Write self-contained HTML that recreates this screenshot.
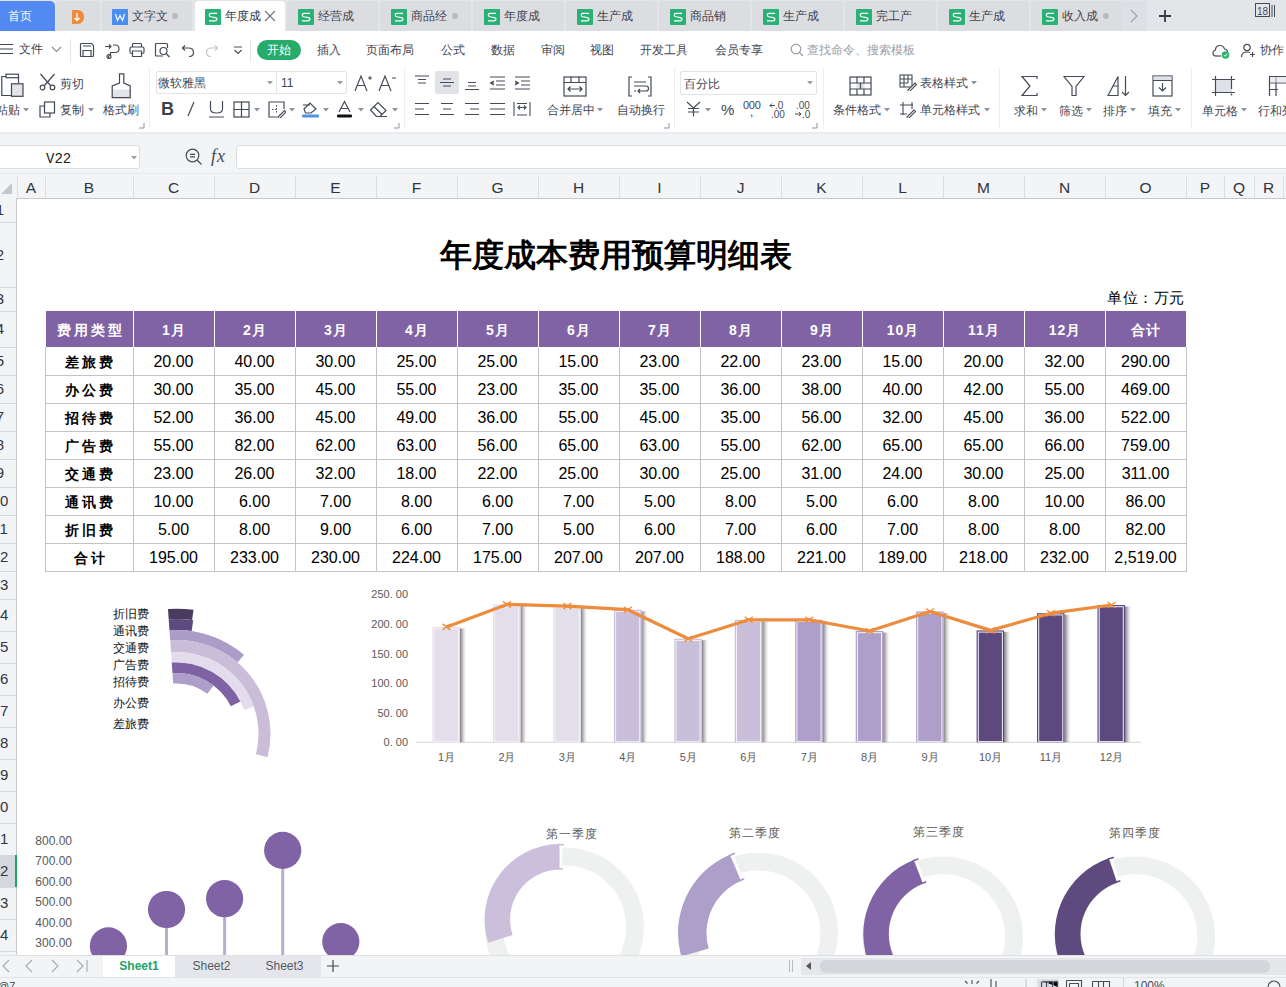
<!DOCTYPE html>
<html><head><meta charset="utf-8"><style>
html,body{margin:0;padding:0;}
body{width:1286px;height:987px;overflow:hidden;position:relative;font-family:"Liberation Sans", sans-serif;background:#fff}
div{box-sizing:border-box}
</style></head><body>
<div style="position:absolute;left:0px;top:0px;width:1286px;height:31px;background:#e4e5e9"></div><div style="position:absolute;left:0px;top:1px;width:55px;height:30px;background:#5289f3;border-top-right-radius:5px"></div><div style="position:absolute;left:8px;top:7.0px;height:18px;font-size:12px;line-height:18px;color:#ffffff;white-space:nowrap;">首页</div><div style="position:absolute;left:56px;top:1px;width:44px;height:30px;background:#dcdde1;border-radius:4px 4px 0 0"></div><svg style="position:absolute;left:71px;top:9px;width:14px;height:16px;" width="14" height="16" viewBox="0 0 14 16"><path d="M1 1H6C11 1 13 4.5 13 8C13 11.5 11 15 6 15H1Z" fill="#f08a3c"/><path d="M6 4V11M3.5 9L6 11.5L8.5 9" fill="none" stroke="#fff" stroke-width="1.3"/></svg><div style="position:absolute;left:102px;top:1px;width:90px;height:30px;background:#dcdde1;border-radius:4px 4px 0 0"></div><svg style="position:absolute;left:112px;top:9px;width:16px;height:16px;" width="16" height="16" viewBox="0 0 16 16"><rect width="16" height="16" fill="#4b8ef1"/><path d="M3.5 5L5.5 11.5L8 6.5L10.5 11.5L12.5 5" fill="none" stroke="#fff" stroke-width="1.2"/></svg><div style="position:absolute;left:132px;top:7.0px;height:18px;font-size:12px;line-height:18px;color:#3d4452;white-space:nowrap;">文字文</div><div style="position:absolute;left:172px;top:13px;width:6px;height:6px;border-radius:3px;background:#b9bbc4"></div><div style="position:absolute;left:195px;top:1px;width:90px;height:31px;background:#ffffff;border-radius:4px 4px 0 0"></div><svg style="position:absolute;left:205px;top:9px;width:16px;height:16px;" width="16" height="16" viewBox="0 0 16 16"><rect width="16" height="16" rx="1" fill="#2bb176"/><path d="M12 4.4H6Q4.2 4.4 4.2 6Q4.2 7.4 6 7.8L10.3 8.6Q12 9 12 10.3Q12 11.8 10.2 11.8H4" fill="none" stroke="#fff" stroke-width="1.15"/></svg><div style="position:absolute;left:225px;top:7.0px;height:18px;font-size:12px;line-height:18px;color:#2f3542;white-space:nowrap;">年度成</div><svg style="position:absolute;left:264px;top:10px;width:12px;height:12px;" width="12" height="12" viewBox="0 0 12 12"><path d="M1 1L11 11M11 1L1 11" stroke="#6b717c" stroke-width="1.1"/></svg><div style="position:absolute;left:287px;top:1px;width:91px;height:30px;background:#dcdde1;border-radius:4px 4px 0 0"></div><svg style="position:absolute;left:298px;top:9px;width:16px;height:16px;" width="16" height="16" viewBox="0 0 16 16"><rect width="16" height="16" rx="1" fill="#2bb176"/><path d="M12 4.4H6Q4.2 4.4 4.2 6Q4.2 7.4 6 7.8L10.3 8.6Q12 9 12 10.3Q12 11.8 10.2 11.8H4" fill="none" stroke="#fff" stroke-width="1.15"/></svg><div style="position:absolute;left:318px;top:7.0px;height:18px;font-size:12px;line-height:18px;color:#3d4452;white-space:nowrap;">经营成</div><div style="position:absolute;left:380px;top:1px;width:91px;height:30px;background:#dcdde1;border-radius:4px 4px 0 0"></div><svg style="position:absolute;left:391px;top:9px;width:16px;height:16px;" width="16" height="16" viewBox="0 0 16 16"><rect width="16" height="16" rx="1" fill="#2bb176"/><path d="M12 4.4H6Q4.2 4.4 4.2 6Q4.2 7.4 6 7.8L10.3 8.6Q12 9 12 10.3Q12 11.8 10.2 11.8H4" fill="none" stroke="#fff" stroke-width="1.15"/></svg><div style="position:absolute;left:411px;top:7.0px;height:18px;font-size:12px;line-height:18px;color:#3d4452;white-space:nowrap;">商品经</div><div style="position:absolute;left:452px;top:13px;width:6px;height:6px;border-radius:3px;background:#b9bbc4"></div><div style="position:absolute;left:473px;top:1px;width:91px;height:30px;background:#dcdde1;border-radius:4px 4px 0 0"></div><svg style="position:absolute;left:484px;top:9px;width:16px;height:16px;" width="16" height="16" viewBox="0 0 16 16"><rect width="16" height="16" rx="1" fill="#2bb176"/><path d="M12 4.4H6Q4.2 4.4 4.2 6Q4.2 7.4 6 7.8L10.3 8.6Q12 9 12 10.3Q12 11.8 10.2 11.8H4" fill="none" stroke="#fff" stroke-width="1.15"/></svg><div style="position:absolute;left:504px;top:7.0px;height:18px;font-size:12px;line-height:18px;color:#3d4452;white-space:nowrap;">年度成</div><div style="position:absolute;left:566px;top:1px;width:91px;height:30px;background:#dcdde1;border-radius:4px 4px 0 0"></div><svg style="position:absolute;left:577px;top:9px;width:16px;height:16px;" width="16" height="16" viewBox="0 0 16 16"><rect width="16" height="16" rx="1" fill="#2bb176"/><path d="M12 4.4H6Q4.2 4.4 4.2 6Q4.2 7.4 6 7.8L10.3 8.6Q12 9 12 10.3Q12 11.8 10.2 11.8H4" fill="none" stroke="#fff" stroke-width="1.15"/></svg><div style="position:absolute;left:597px;top:7.0px;height:18px;font-size:12px;line-height:18px;color:#3d4452;white-space:nowrap;">生产成</div><div style="position:absolute;left:659px;top:1px;width:91px;height:30px;background:#dcdde1;border-radius:4px 4px 0 0"></div><svg style="position:absolute;left:670px;top:9px;width:16px;height:16px;" width="16" height="16" viewBox="0 0 16 16"><rect width="16" height="16" rx="1" fill="#2bb176"/><path d="M12 4.4H6Q4.2 4.4 4.2 6Q4.2 7.4 6 7.8L10.3 8.6Q12 9 12 10.3Q12 11.8 10.2 11.8H4" fill="none" stroke="#fff" stroke-width="1.15"/></svg><div style="position:absolute;left:690px;top:7.0px;height:18px;font-size:12px;line-height:18px;color:#3d4452;white-space:nowrap;">商品销</div><div style="position:absolute;left:752px;top:1px;width:91px;height:30px;background:#dcdde1;border-radius:4px 4px 0 0"></div><svg style="position:absolute;left:763px;top:9px;width:16px;height:16px;" width="16" height="16" viewBox="0 0 16 16"><rect width="16" height="16" rx="1" fill="#2bb176"/><path d="M12 4.4H6Q4.2 4.4 4.2 6Q4.2 7.4 6 7.8L10.3 8.6Q12 9 12 10.3Q12 11.8 10.2 11.8H4" fill="none" stroke="#fff" stroke-width="1.15"/></svg><div style="position:absolute;left:783px;top:7.0px;height:18px;font-size:12px;line-height:18px;color:#3d4452;white-space:nowrap;">生产成</div><div style="position:absolute;left:845px;top:1px;width:91px;height:30px;background:#dcdde1;border-radius:4px 4px 0 0"></div><svg style="position:absolute;left:856px;top:9px;width:16px;height:16px;" width="16" height="16" viewBox="0 0 16 16"><rect width="16" height="16" rx="1" fill="#2bb176"/><path d="M12 4.4H6Q4.2 4.4 4.2 6Q4.2 7.4 6 7.8L10.3 8.6Q12 9 12 10.3Q12 11.8 10.2 11.8H4" fill="none" stroke="#fff" stroke-width="1.15"/></svg><div style="position:absolute;left:876px;top:7.0px;height:18px;font-size:12px;line-height:18px;color:#3d4452;white-space:nowrap;">完工产</div><div style="position:absolute;left:938px;top:1px;width:91px;height:30px;background:#dcdde1;border-radius:4px 4px 0 0"></div><svg style="position:absolute;left:949px;top:9px;width:16px;height:16px;" width="16" height="16" viewBox="0 0 16 16"><rect width="16" height="16" rx="1" fill="#2bb176"/><path d="M12 4.4H6Q4.2 4.4 4.2 6Q4.2 7.4 6 7.8L10.3 8.6Q12 9 12 10.3Q12 11.8 10.2 11.8H4" fill="none" stroke="#fff" stroke-width="1.15"/></svg><div style="position:absolute;left:969px;top:7.0px;height:18px;font-size:12px;line-height:18px;color:#3d4452;white-space:nowrap;">生产成</div><div style="position:absolute;left:1031px;top:1px;width:91px;height:30px;background:#dcdde1;border-radius:4px 4px 0 0"></div><svg style="position:absolute;left:1042px;top:9px;width:16px;height:16px;" width="16" height="16" viewBox="0 0 16 16"><rect width="16" height="16" rx="1" fill="#2bb176"/><path d="M12 4.4H6Q4.2 4.4 4.2 6Q4.2 7.4 6 7.8L10.3 8.6Q12 9 12 10.3Q12 11.8 10.2 11.8H4" fill="none" stroke="#fff" stroke-width="1.15"/></svg><div style="position:absolute;left:1062px;top:7.0px;height:18px;font-size:12px;line-height:18px;color:#3d4452;white-space:nowrap;">收入成</div><div style="position:absolute;left:1103px;top:13px;width:6px;height:6px;border-radius:3px;background:#b9bbc4"></div><div style="position:absolute;left:1122px;top:1px;width:25px;height:30px;background:#dfe0e6"></div><svg style="position:absolute;left:1129px;top:9px;width:10px;height:14px;" width="10" height="14" viewBox="0 0 10 14"><path d="M2 1L8 7L2 13" fill="none" stroke="#9da2ad" stroke-width="1.2"/></svg><svg style="position:absolute;left:1158px;top:9px;width:14px;height:14px;" width="14" height="14" viewBox="0 0 14 14"><path d="M7 1V13M1 7H13" stroke="#333a48" stroke-width="1.8"/></svg><svg style="position:absolute;left:1254px;top:2px;width:24px;height:16px;" width="24" height="16" viewBox="0 0 24 16"><rect x="1.5" y="1.5" width="14" height="13" fill="none" stroke="#444b57" stroke-width="1"/><text x="3" y="12.5" font-size="10" font-family="Liberation Sans" fill="#444b57">18</text><path d="M18 3V15M20.5 3V15" stroke="#444b57" stroke-width="1"/></svg><div style="position:absolute;left:0px;top:31px;width:1286px;height:101px;background:#ffffff"></div><svg style="position:absolute;left:0px;top:43px;width:14px;height:12px;" width="14" height="12" viewBox="0 0 14 12"><path d="M0 1.5H13M0 6H13M0 10.5H13" stroke="#3f4552" stroke-width="1.2"/></svg><div style="position:absolute;left:19px;top:40.0px;height:18px;font-size:12px;line-height:18px;color:#3f4552;white-space:nowrap;">文件</div><svg style="position:absolute;left:51px;top:45px;width:11px;height:8px;" width="11" height="8" viewBox="0 0 11 8"><path d="M1 2L5.5 6.5L10 2" fill="none" stroke="#8a8f99" stroke-width="1.1"/></svg><div style="position:absolute;left:70px;top:39px;width:1px;height:23px;background:#e3e4e7"></div><div style="position:absolute;left:250px;top:39px;width:1px;height:23px;background:#e3e4e7"></div><svg style="position:absolute;left:79px;top:42px;width:16px;height:16px;" width="16" height="16" viewBox="0 0 16 16"><path d="M1.5 2.5Q1.5 1.5 2.5 1.5H12.5L14.5 3.5V13.5Q14.5 14.5 13.5 14.5H2.5Q1.5 14.5 1.5 13.5Z M4 14.5V8.5H12V14.5 M4 4H12" fill="none" stroke="#464c58" stroke-width="1.2"/></svg><svg style="position:absolute;left:104px;top:43px;width:17px;height:16px;" width="17" height="16" viewBox="0 0 17 16"><path d="M1 3.5H7M5 1.5L7 3.5L5 5.5 M9 2H11Q15 2 15 6Q15 9.5 11 9.5H6.5V12 M6.5 12A2 2 0 1 0 6.5 16" fill="none" stroke="#464c58" stroke-width="1.2"/><circle cx="5" cy="13.5" r="2" fill="none" stroke="#464c58" stroke-width="1.2"/></svg><svg style="position:absolute;left:129px;top:42px;width:16px;height:16px;" width="16" height="16" viewBox="0 0 16 16"><path d="M3.5 5V2.5Q3.5 1.5 4.5 1.5H11.5Q12.5 1.5 12.5 2.5V5 M3.5 11.5H2.5Q1 11.5 1 10V6.5Q1 5 2.5 5H13.5Q15 5 15 6.5V10Q15 11.5 13.5 11.5H12.5 M3.5 9H12.5V14.5H3.5Z" fill="none" stroke="#464c58" stroke-width="1.2"/></svg><svg style="position:absolute;left:154px;top:42px;width:17px;height:16px;" width="17" height="16" viewBox="0 0 17 16"><path d="M9 14H2.5Q1.5 14 1.5 13V2.5Q1.5 1.5 2.5 1.5H12.5Q13.5 1.5 13.5 2.5V6" fill="none" stroke="#464c58" stroke-width="1.2"/><circle cx="9.5" cy="9" r="3.5" fill="none" stroke="#464c58" stroke-width="1.2"/><path d="M12 11.5L15.5 15" fill="none" stroke="#464c58" stroke-width="1.2"/></svg><svg style="position:absolute;left:181px;top:44px;width:14px;height:13px;" width="14" height="13" viewBox="0 0 14 13"><path d="M4 1.5L1.5 4L4 6.5 M1.5 4H7.5Q12.5 4 12.5 8.5Q12.5 12.5 8 12.5" fill="none" stroke="#464c58" stroke-width="1.2"/></svg><svg style="position:absolute;left:205px;top:44px;width:14px;height:13px;" width="14" height="13" viewBox="0 0 14 13"><path d="M10 1.5L12.5 4L10 6.5 M12.5 4H6.5Q1.5 4 1.5 8.5Q1.5 12.5 6 12.5" fill="none" stroke="#c3c6cc" stroke-width="1.2"/></svg><svg style="position:absolute;left:233px;top:46px;width:10px;height:9px;" width="10" height="9" viewBox="0 0 10 9"><path d="M1 1H9 M1.5 4L5 7.5L8.5 4" fill="none" stroke="#464c58" stroke-width="1.2"/></svg><div style="position:absolute;left:257px;top:40px;width:44px;height:20px;background:#26ab6b;border-radius:10px;color:#fff;font-size:12px;line-height:20px;text-align:center">开始</div><div style="position:absolute;left:317px;top:41.0px;height:18px;font-size:12px;line-height:18px;color:#3f4552;white-space:nowrap;">插入</div><div style="position:absolute;left:366px;top:41.0px;height:18px;font-size:12px;line-height:18px;color:#3f4552;white-space:nowrap;">页面布局</div><div style="position:absolute;left:441px;top:41.0px;height:18px;font-size:12px;line-height:18px;color:#3f4552;white-space:nowrap;">公式</div><div style="position:absolute;left:491px;top:41.0px;height:18px;font-size:12px;line-height:18px;color:#3f4552;white-space:nowrap;">数据</div><div style="position:absolute;left:541px;top:41.0px;height:18px;font-size:12px;line-height:18px;color:#3f4552;white-space:nowrap;">审阅</div><div style="position:absolute;left:590px;top:41.0px;height:18px;font-size:12px;line-height:18px;color:#3f4552;white-space:nowrap;">视图</div><div style="position:absolute;left:640px;top:41.0px;height:18px;font-size:12px;line-height:18px;color:#3f4552;white-space:nowrap;">开发工具</div><div style="position:absolute;left:715px;top:41.0px;height:18px;font-size:12px;line-height:18px;color:#3f4552;white-space:nowrap;">会员专享</div><svg style="position:absolute;left:790px;top:43px;width:14px;height:14px;" width="14" height="14" viewBox="0 0 14 14"><circle cx="6" cy="6" r="4.8" fill="none" stroke="#9a9fa8" stroke-width="1.2"/><path d="M9.5 9.5L13 13" stroke="#9a9fa8" stroke-width="1.2"/></svg><div style="position:absolute;left:807px;top:41.0px;height:18px;font-size:12px;line-height:18px;color:#9ba0a9;white-space:nowrap;">查找命令、搜索模板</div><svg style="position:absolute;left:1212px;top:43px;width:20px;height:16px;" width="20" height="16" viewBox="0 0 20 16"><path d="M4 13Q1 13 1 10Q1 7.5 3.5 7Q3.5 2.5 8 2.5Q11.5 2.5 12.5 6Q15.5 6 15.5 9.5" fill="none" stroke="#454b57" stroke-width="1.2"/><path d="M4 13H9" stroke="#454b57" stroke-width="1.2"/><circle cx="13.5" cy="12" r="3.8" fill="#2bb673"/><path d="M11.8 12L13.1 13.3L15.3 10.9" fill="none" stroke="#fff" stroke-width="1"/></svg><svg style="position:absolute;left:1240px;top:43px;width:16px;height:15px;" width="16" height="15" viewBox="0 0 16 15"><circle cx="7" cy="4.5" r="3.2" fill="none" stroke="#464c58" stroke-width="1.2"/><path d="M1.5 14Q1.5 9 7 9Q9 9 10 9.6 M12.5 9V14 M10 11.5H15" fill="none" stroke="#464c58" stroke-width="1.2"/></svg><div style="position:absolute;left:1260px;top:41.0px;height:18px;font-size:12px;line-height:18px;color:#3f4552;white-space:nowrap;">协作</div><div style="position:absolute;left:149px;top:68px;width:1px;height:61px;background:#eceef1"></div><div style="position:absolute;left:404px;top:68px;width:1px;height:61px;background:#eceef1"></div><div style="position:absolute;left:674px;top:68px;width:1px;height:61px;background:#eceef1"></div><div style="position:absolute;left:823px;top:68px;width:1px;height:61px;background:#eceef1"></div><div style="position:absolute;left:999px;top:68px;width:1px;height:61px;background:#eceef1"></div><div style="position:absolute;left:1191px;top:68px;width:1px;height:61px;background:#eceef1"></div><svg style="position:absolute;left:0px;top:72px;width:25px;height:27px;" width="25" height="27" viewBox="0 0 25 27"><path d="M6 4.5H1.8V23.5H11 M18.5 4.5V11" fill="none" stroke="#424854" stroke-width="1.2"/><rect x="6" y="2.2" width="12.5" height="3.5" fill="none" stroke="#424854" stroke-width="1.2"/><rect x="11.5" y="11.8" width="11.5" height="12.5" fill="#e3e4ea" stroke="#424854" stroke-width="1.2"/></svg><div style="position:absolute;left:-4px;top:101.0px;height:18px;font-size:12px;line-height:18px;color:#3f4552;white-space:nowrap;">粘贴</div><svg style="position:absolute;left:23px;top:108px;width:6px;height:4px;" width="6" height="4" viewBox="0 0 6 4"><path d="M0 0H6L3 3.5Z" fill="#8d929b"/></svg><svg style="position:absolute;left:39px;top:73px;width:18px;height:18px;" width="18" height="18" viewBox="0 0 18 18"><path d="M1.5 1L11.5 12.5 M15.5 1L5.5 12.5" fill="none" stroke="#424854" stroke-width="1.2"/><circle cx="3.5" cy="14.5" r="2.3" fill="none" stroke="#424854" stroke-width="1.2"/><circle cx="13.5" cy="14.5" r="2.3" fill="none" stroke="#424854" stroke-width="1.2"/></svg><div style="position:absolute;left:60px;top:75.0px;height:18px;font-size:12px;line-height:18px;color:#3f4552;white-space:nowrap;">剪切</div><svg style="position:absolute;left:39px;top:101px;width:17px;height:17px;" width="17" height="17" viewBox="0 0 17 17"><rect x="5.5" y="1" width="10" height="11" fill="none" stroke="#424854" stroke-width="1.2"/><path d="M5.5 5H1V16H11V12" fill="none" stroke="#424854" stroke-width="1.2"/></svg><div style="position:absolute;left:60px;top:101.0px;height:18px;font-size:12px;line-height:18px;color:#3f4552;white-space:nowrap;">复制</div><svg style="position:absolute;left:88px;top:108px;width:6px;height:4px;" width="6" height="4" viewBox="0 0 6 4"><path d="M0 0H6L3 3.5Z" fill="#8d929b"/></svg><svg style="position:absolute;left:111px;top:72px;width:21px;height:28px;" width="21" height="28" viewBox="0 0 21 28"><rect x="1.5" y="17.5" width="18" height="8" fill="#e3e4ea"/><path d="M8.5 1.8H12.8V11L19.2 14V25.6H1.2V14L8.5 11Z" fill="none" stroke="#424854" stroke-width="1.2"/></svg><div style="position:absolute;left:103px;top:101.0px;height:18px;font-size:12px;line-height:18px;color:#3f4552;white-space:nowrap;">格式刷</div><svg style="position:absolute;left:139px;top:123px;width:6px;height:6px;" width="6" height="6" viewBox="0 0 6 6"><path d="M5 0V5H0" fill="none" stroke="#8d929b" stroke-width="1"/></svg><div style="position:absolute;left:156px;top:71px;width:191px;height:23px;border:1px solid #e3e4e8;border-radius:2px;box-sizing:border-box"></div><div style="position:absolute;left:276px;top:71px;width:1px;height:23px;background:#e3e4e8"></div><div style="position:absolute;left:158px;top:74.0px;height:18px;font-size:12px;line-height:18px;color:#3f4552;white-space:nowrap;">微软雅黑</div><svg style="position:absolute;left:267px;top:81px;width:6px;height:4px;" width="6" height="4" viewBox="0 0 6 4"><path d="M0 0H6L3 3.5Z" fill="#9a9ea6"/></svg><div style="position:absolute;left:281px;top:74.0px;height:18px;font-size:12px;line-height:18px;color:#3f4552;white-space:nowrap;">11</div><svg style="position:absolute;left:337px;top:81px;width:6px;height:4px;" width="6" height="4" viewBox="0 0 6 4"><path d="M0 0H6L3 3.5Z" fill="#9a9ea6"/></svg><svg style="position:absolute;left:354px;top:73px;width:18px;height:20px;" width="18" height="20" viewBox="0 0 18 20"><path d="M1 18L7 3L13 18M3.5 12.5H10.5" fill="none" stroke="#454b57" stroke-width="1.2"/><path d="M14 5H18M16 3V7" stroke="#454b57" stroke-width="1"/></svg><svg style="position:absolute;left:378px;top:73px;width:18px;height:20px;" width="18" height="20" viewBox="0 0 18 20"><path d="M1 18L7 3L13 18M3.5 12.5H10.5" fill="none" stroke="#454b57" stroke-width="1.2"/><path d="M14 5H18" stroke="#454b57" stroke-width="1"/></svg><div style="position:absolute;left:161px;top:99px;width:14px;height:20px;font-size:18px;line-height:20px;color:#3a404c;font-weight:bold">B</div><svg style="position:absolute;left:185px;top:101px;width:12px;height:16px;" width="12" height="16" viewBox="0 0 12 16"><path d="M9 1L3 15" stroke="#454b57" stroke-width="1.2"/></svg><svg style="position:absolute;left:208px;top:100px;width:17px;height:18px;" width="17" height="18" viewBox="0 0 17 18"><path d="M2.5 1V9Q2.5 13 8.5 13Q14.5 13 14.5 9V1M1 17H16" fill="none" stroke="#454b57" stroke-width="1.2"/></svg><svg style="position:absolute;left:233px;top:101px;width:17px;height:17px;" width="17" height="17" viewBox="0 0 17 17"><rect x="1" y="1" width="15" height="15" fill="none" stroke="#424854" stroke-width="1.2"/><path d="M8.5 1V16M1 8.5H16" fill="none" stroke="#424854" stroke-width="1.2"/></svg><svg style="position:absolute;left:254px;top:108px;width:6px;height:4px;" width="6" height="4" viewBox="0 0 6 4"><path d="M0 0H6L3 3.5Z" fill="#8d929b"/></svg><svg style="position:absolute;left:268px;top:101px;width:18px;height:17px;" width="18" height="17" viewBox="0 0 18 17"><path d="M9 16H1V1H16V8" fill="none" stroke="#454b57" stroke-width="1.2"/><path d="M4 8.5H9M8.5 4V12" stroke="#454b57" stroke-width="1" stroke-dasharray="1.5 1.5"/><path d="M10 16L16.5 9.5L18 11L11.5 17.5H10Z" fill="none" stroke="#454b57" stroke-width="1.1"/></svg><svg style="position:absolute;left:289px;top:108px;width:6px;height:4px;" width="6" height="4" viewBox="0 0 6 4"><path d="M0 0H6L3 3.5Z" fill="#8d929b"/></svg><svg style="position:absolute;left:301px;top:100px;width:19px;height:18px;" width="19" height="18" viewBox="0 0 19 18"><path d="M3 9L9 3L15 9L10 13H4.5Z" fill="none" stroke="#454b57" stroke-width="1.2"/><path d="M2 5H9" stroke="#454b57" stroke-width="1.1"/><rect x="1" y="14.5" width="17" height="3" rx="1.2" fill="#4a94e4"/></svg><svg style="position:absolute;left:323px;top:108px;width:6px;height:4px;" width="6" height="4" viewBox="0 0 6 4"><path d="M0 0H6L3 3.5Z" fill="#8d929b"/></svg><svg style="position:absolute;left:336px;top:100px;width:17px;height:18px;" width="17" height="18" viewBox="0 0 17 18"><path d="M3 12L8.5 1.5L14 12M5 8.5H12" fill="none" stroke="#454b57" stroke-width="1.2"/><rect x="1" y="14.5" width="15" height="3" rx="1.2" fill="#111"/></svg><svg style="position:absolute;left:358px;top:108px;width:6px;height:4px;" width="6" height="4" viewBox="0 0 6 4"><path d="M0 0H6L3 3.5Z" fill="#8d929b"/></svg><svg style="position:absolute;left:369px;top:101px;width:19px;height:16px;" width="19" height="16" viewBox="0 0 19 16"><path d="M1.5 9L9 1.5L17 9.5L11 15.5H7.5Z M5 5.5L13 13.5 M7.5 15.5H18" fill="none" stroke="#454b57" stroke-width="1.2"/></svg><svg style="position:absolute;left:392px;top:108px;width:6px;height:4px;" width="6" height="4" viewBox="0 0 6 4"><path d="M0 0H6L3 3.5Z" fill="#8d929b"/></svg><svg style="position:absolute;left:394px;top:123px;width:6px;height:6px;" width="6" height="6" viewBox="0 0 6 6"><path d="M5 0V5H0" fill="none" stroke="#8d929b" stroke-width="1"/></svg><div style="position:absolute;left:435px;top:71px;width:24px;height:23px;background:#e2e3e8;border-radius:2px"></div><svg style="position:absolute;left:414px;top:75px;width:16px;height:9px;" width="16" height="9" viewBox="0 0 16 9"><path d="M1 1H15M4 4.5H12M4 8H12" stroke="#454b57" stroke-width="1.1"/></svg><svg style="position:absolute;left:439px;top:78px;width:16px;height:10px;" width="16" height="10" viewBox="0 0 16 10"><path d="M4 1H12M1 4.5H15M4 8H12" stroke="#454b57" stroke-width="1.1"/></svg><svg style="position:absolute;left:464px;top:81px;width:16px;height:10px;" width="16" height="10" viewBox="0 0 16 10"><path d="M4 1.5H12M4 5H12M1 8.5H15" stroke="#454b57" stroke-width="1.1"/></svg><svg style="position:absolute;left:489px;top:76px;width:17px;height:14px;" width="17" height="14" viewBox="0 0 17 14"><path d="M1 1H16M7 5H16M7 9H16M1 13H16M5 5L1.5 7L5 9M1.5 7H5" stroke="#454b57" stroke-width="1.1" fill="none"/></svg><svg style="position:absolute;left:514px;top:76px;width:17px;height:14px;" width="17" height="14" viewBox="0 0 17 14"><path d="M1 1H16M7 5H16M7 9H16M1 13H16M1 5L4.5 7L1 9M1 7H4.5" stroke="#454b57" stroke-width="1.1" fill="none"/></svg><svg style="position:absolute;left:414px;top:102px;width:16px;height:14px;" width="16" height="14" viewBox="0 0 16 14"><path d="M1 1.5H15M1 7H10M1 12.5H15" stroke="#454b57" stroke-width="1.1"/></svg><svg style="position:absolute;left:439px;top:102px;width:16px;height:14px;" width="16" height="14" viewBox="0 0 16 14"><path d="M2 1.5H14M4 7H12M1 12.5H15" stroke="#454b57" stroke-width="1.1"/></svg><svg style="position:absolute;left:464px;top:102px;width:16px;height:14px;" width="16" height="14" viewBox="0 0 16 14"><path d="M1 1.5H15M6 7H15M1 12.5H15" stroke="#454b57" stroke-width="1.1"/></svg><svg style="position:absolute;left:489px;top:102px;width:17px;height:14px;" width="17" height="14" viewBox="0 0 17 14"><path d="M1 1.5H16M1 7H16M1 12.5H16" stroke="#454b57" stroke-width="1.1"/></svg><svg style="position:absolute;left:513px;top:101px;width:18px;height:16px;" width="18" height="16" viewBox="0 0 18 16"><path d="M1 1V15M17 1V15M4 2.5H14M4 14H14M5 6.5H13M7 4.5L5 6.5L7 8.5M11 4.5L13 6.5L11 8.5" fill="none" stroke="#454b57" stroke-width="1.1"/></svg><svg style="position:absolute;left:563px;top:76px;width:24px;height:21px;" width="24" height="21" viewBox="0 0 24 21"><rect x="1" y="1" width="22" height="19" fill="none" stroke="#424854" stroke-width="1.2"/><path d="M1 6.5H23M8 1V6.5M16 1V6.5M5 13H19M7.5 10.5L5 13L7.5 15.5M16.5 10.5L19 13L16.5 15.5" fill="none" stroke="#424854" stroke-width="1.2"/></svg><div style="position:absolute;left:547px;top:101.0px;height:18px;font-size:12px;line-height:18px;color:#3f4552;white-space:nowrap;">合并居中</div><svg style="position:absolute;left:597px;top:108px;width:6px;height:4px;" width="6" height="4" viewBox="0 0 6 4"><path d="M0 0H6L3 3.5Z" fill="#8d929b"/></svg><svg style="position:absolute;left:628px;top:76px;width:24px;height:21px;" width="24" height="21" viewBox="0 0 24 21"><path d="M4 1H1V20H4M20 1H23V20H20M6 6H18M6 10H18Q20.5 10 20.5 12.5Q20.5 15 18 15H10M12 13L10 15L12 17M6 15H8" fill="none" stroke="#424854" stroke-width="1.2"/></svg><div style="position:absolute;left:617px;top:101.0px;height:18px;font-size:12px;line-height:18px;color:#3f4552;white-space:nowrap;">自动换行</div><svg style="position:absolute;left:664px;top:123px;width:6px;height:6px;" width="6" height="6" viewBox="0 0 6 6"><path d="M5 0V5H0" fill="none" stroke="#8d929b" stroke-width="1"/></svg><div style="position:absolute;left:680px;top:71px;width:137px;height:24px;border:1px solid #e3e4e8;border-radius:2px;box-sizing:border-box"></div><div style="position:absolute;left:684px;top:75.0px;height:18px;font-size:12px;line-height:18px;color:#3f4552;white-space:nowrap;">百分比</div><svg style="position:absolute;left:807px;top:81px;width:6px;height:4px;" width="6" height="4" viewBox="0 0 6 4"><path d="M0 0H6L3 3.5Z" fill="#9a9ea6"/></svg><svg style="position:absolute;left:686px;top:101px;width:15px;height:16px;" width="15" height="16" viewBox="0 0 15 16"><path d="M1 1L7.5 7L14 1M7.5 7V15.5M2 7.5H13M2 11H13" fill="none" stroke="#454b57" stroke-width="1.2"/></svg><svg style="position:absolute;left:705px;top:108px;width:6px;height:4px;" width="6" height="4" viewBox="0 0 6 4"><path d="M0 0H6L3 3.5Z" fill="#8d929b"/></svg><div style="position:absolute;left:721px;top:98.5px;height:21px;font-size:15px;line-height:21px;color:#3f4552;white-space:nowrap;">%</div><div style="position:absolute;left:743px;top:96.5px;height:17px;font-size:11px;line-height:17px;color:#3f4552;white-space:nowrap;letter-spacing:-0.3px">000</div><div style="position:absolute;left:750px;top:103.0px;height:18px;font-size:12px;line-height:18px;color:#3f4552;white-space:nowrap;">,</div><svg style="position:absolute;left:769px;top:101px;width:18px;height:17px;" width="18" height="17" viewBox="0 0 18 17"><text x="6" y="8" font-size="10" font-family="Liberation Sans" fill="#454b57">.0</text><text x="2" y="16.5" font-size="10" font-family="Liberation Sans" fill="#454b57">.00</text><path d="M1 4.5H6M3 2.5L1 4.5L3 6.5" fill="none" stroke="#454b57" stroke-width="1"/></svg><svg style="position:absolute;left:794px;top:101px;width:19px;height:17px;" width="19" height="17" viewBox="0 0 19 17"><text x="2" y="8" font-size="10" font-family="Liberation Sans" fill="#454b57">.00</text><text x="8" y="16.5" font-size="10" font-family="Liberation Sans" fill="#454b57">.0</text><path d="M1 13H7M5 11L7 13L5 15" fill="none" stroke="#454b57" stroke-width="1"/></svg><svg style="position:absolute;left:812px;top:123px;width:6px;height:6px;" width="6" height="6" viewBox="0 0 6 6"><path d="M5 0V5H0" fill="none" stroke="#8d929b" stroke-width="1"/></svg><svg style="position:absolute;left:849px;top:76px;width:23px;height:20px;" width="23" height="20" viewBox="0 0 23 20"><rect x="1" y="1" width="21" height="18" fill="none" stroke="#424854" stroke-width="1.2"/><rect x="7.5" y="6.5" width="8" height="6" fill="#e0e1e8"/><path d="M1 7H22M1 13H22M8 1V7M15 1V7M8 13V19M15 13V19M11.5 7V13" fill="none" stroke="#424854" stroke-width="1.2"/></svg><div style="position:absolute;left:833px;top:101.0px;height:18px;font-size:12px;line-height:18px;color:#3f4552;white-space:nowrap;">条件格式</div><svg style="position:absolute;left:884px;top:108px;width:6px;height:4px;" width="6" height="4" viewBox="0 0 6 4"><path d="M0 0H6L3 3.5Z" fill="#8d929b"/></svg><svg style="position:absolute;left:899px;top:74px;width:18px;height:17px;" width="18" height="17" viewBox="0 0 18 17"><rect x="1" y="1" width="12" height="12" fill="none" stroke="#454b57" stroke-width="1.1"/><path d="M1 5H13M1 9H9M5 1V13M9 1V9" stroke="#454b57" stroke-width="1.1"/><path d="M9 16L16 9L17.5 10.5L10.5 17.5H9Z" fill="#fff" stroke="#454b57" stroke-width="1.1"/></svg><div style="position:absolute;left:920px;top:74.0px;height:18px;font-size:12px;line-height:18px;color:#3f4552;white-space:nowrap;">表格样式</div><svg style="position:absolute;left:971px;top:81px;width:6px;height:4px;" width="6" height="4" viewBox="0 0 6 4"><path d="M0 0H6L3 3.5Z" fill="#8d929b"/></svg><svg style="position:absolute;left:899px;top:101px;width:18px;height:17px;" width="18" height="17" viewBox="0 0 18 17"><path d="M1 4H14M4 1V14M1 13H8M13 1V8" fill="none" stroke="#454b57" stroke-width="1.1"/><path d="M8 16L15 9L16.5 10.5L9.5 17.5H8Z" fill="#fff" stroke="#454b57" stroke-width="1.1"/></svg><div style="position:absolute;left:920px;top:101.0px;height:18px;font-size:12px;line-height:18px;color:#3f4552;white-space:nowrap;">单元格样式</div><svg style="position:absolute;left:984px;top:108px;width:6px;height:4px;" width="6" height="4" viewBox="0 0 6 4"><path d="M0 0H6L3 3.5Z" fill="#8d929b"/></svg><svg style="position:absolute;left:1020px;top:75px;width:19px;height:22px;" width="19" height="22" viewBox="0 0 19 22"><path d="M17 4V1.5H2L10 11L2 20.5H17V18" fill="none" stroke="#454b57" stroke-width="1.2"/></svg><div style="position:absolute;left:1014px;top:102.0px;height:18px;font-size:12px;line-height:18px;color:#3f4552;white-space:nowrap;">求和</div><svg style="position:absolute;left:1041px;top:108px;width:6px;height:4px;" width="6" height="4" viewBox="0 0 6 4"><path d="M0 0H6L3 3.5Z" fill="#8d929b"/></svg><svg style="position:absolute;left:1063px;top:75px;width:22px;height:22px;" width="22" height="22" viewBox="0 0 22 22"><path d="M1 1.5H21L13 11.5V20.5H9V11.5Z" fill="none" stroke="#454b57" stroke-width="1.2"/></svg><div style="position:absolute;left:1059px;top:102.0px;height:18px;font-size:12px;line-height:18px;color:#3f4552;white-space:nowrap;">筛选</div><svg style="position:absolute;left:1086px;top:108px;width:6px;height:4px;" width="6" height="4" viewBox="0 0 6 4"><path d="M0 0H6L3 3.5Z" fill="#8d929b"/></svg><svg style="position:absolute;left:1107px;top:75px;width:24px;height:22px;" width="24" height="22" viewBox="0 0 24 22"><path d="M1 20.5L11 1.5V20.5H1Z M6 11H11" fill="none" stroke="#454b57" stroke-width="1.2"/><path d="M18.5 1V20.5M15 17L18.5 20.5L22 17" fill="none" stroke="#454b57" stroke-width="1.2"/></svg><div style="position:absolute;left:1103px;top:102.0px;height:18px;font-size:12px;line-height:18px;color:#3f4552;white-space:nowrap;">排序</div><svg style="position:absolute;left:1130px;top:108px;width:6px;height:4px;" width="6" height="4" viewBox="0 0 6 4"><path d="M0 0H6L3 3.5Z" fill="#8d929b"/></svg><svg style="position:absolute;left:1152px;top:75px;width:21px;height:22px;" width="21" height="22" viewBox="0 0 21 22"><rect x="1" y="1" width="19" height="20" fill="none" stroke="#454b57" stroke-width="1.2"/><rect x="1.5" y="1.5" width="18" height="3.5" fill="#e0e1e8"/><path d="M1 5.5H20M10.5 8V16M7 12.5L10.5 16L14 12.5" fill="none" stroke="#454b57" stroke-width="1.2"/></svg><div style="position:absolute;left:1148px;top:102.0px;height:18px;font-size:12px;line-height:18px;color:#3f4552;white-space:nowrap;">填充</div><svg style="position:absolute;left:1175px;top:108px;width:6px;height:4px;" width="6" height="4" viewBox="0 0 6 4"><path d="M0 0H6L3 3.5Z" fill="#8d929b"/></svg><svg style="position:absolute;left:1211px;top:75px;width:25px;height:22px;" width="25" height="22" viewBox="0 0 25 22"><rect x="4" y="5" width="17" height="12" fill="#e0e1e8"/><path d="M1 4.5H24M1 17.5H24M4.5 1V21M20.5 1V14" fill="none" stroke="#454b57" stroke-width="1.2"/><circle cx="20.5" cy="19.5" r="0.9" fill="#454b57"/></svg><div style="position:absolute;left:1202px;top:102.0px;height:18px;font-size:12px;line-height:18px;color:#3f4552;white-space:nowrap;">单元格</div><svg style="position:absolute;left:1241px;top:108px;width:6px;height:4px;" width="6" height="4" viewBox="0 0 6 4"><path d="M0 0H6L3 3.5Z" fill="#8d929b"/></svg><svg style="position:absolute;left:1268px;top:75px;width:18px;height:22px;" width="18" height="22" viewBox="0 0 18 22"><path d="M1.5 21V1.5H18M1.5 8H18M1.5 14.5H10M8 1.5V21" fill="none" stroke="#454b57" stroke-width="1.2"/><rect x="2" y="2" width="16" height="5.5" fill="#e0e1e8" opacity="0.6"/></svg><div style="position:absolute;left:1258px;top:102.0px;height:18px;font-size:12px;line-height:18px;color:#3f4552;white-space:nowrap;">行和列</div><div style="position:absolute;left:0px;top:132px;width:1286px;height:43px;background:#f3f4f6"></div><div style="position:absolute;left:0px;top:132px;width:1286px;height:3px;background:linear-gradient(#e6e7ea,#f3f4f6)"></div><div style="position:absolute;left:0px;top:173px;width:1286px;height:1px;background:#e8e9ec"></div><div style="position:absolute;left:-4px;top:145px;width:144px;height:24px;background:#fff;border:1px solid #dcdde1;border-radius:3px;box-sizing:border-box"></div><div style="position:absolute;left:46px;top:148px;width:40px;height:20px;font-family:'Liberation Mono',monospace;font-size:14px;line-height:22px;color:#222">V22</div><svg style="position:absolute;left:131px;top:156px;width:6px;height:4px;" width="6" height="4" viewBox="0 0 6 4"><path d="M0 0H6L3 3.5Z" fill="#9a9ea6"/></svg><svg style="position:absolute;left:185px;top:148px;width:18px;height:19px;" width="18" height="19" viewBox="0 0 18 19"><circle cx="7.5" cy="7.5" r="6.3" fill="none" stroke="#454b57" stroke-width="1.2"/><path d="M5 6.3H10M5 8.8H10M12 12L16.5 16.5" stroke="#454b57" stroke-width="1.2"/></svg><div style="position:absolute;left:211px;top:146px;width:24px;height:20px;font-family:'Liberation Serif',serif;font-style:italic;font-size:18px;line-height:20px;letter-spacing:1px;color:#454b57">fx</div><div style="position:absolute;left:236px;top:145px;width:1056px;height:24px;background:#fff;border:1px solid #dcdde1;border-radius:3px;box-sizing:border-box"></div><div style="position:absolute;left:0px;top:175px;width:1286px;height:780px;background:#ffffff"></div><div style="position:absolute;left:0px;top:175px;width:1286px;height:24px;background:#f3f4f6;border-bottom:1px solid #c6c8cc;box-sizing:border-box"></div><div style="position:absolute;left:17px;top:176px;width:1px;height:22px;background:#dcdde1"></div><div style="position:absolute;left:17px;top:175px;width:28px;height:22px;font-size:15.5px;line-height:26px;text-align:center;color:#30353f">A</div><div style="position:absolute;left:45px;top:176px;width:1px;height:22px;background:#dcdde1"></div><div style="position:absolute;left:45px;top:175px;width:88px;height:22px;font-size:15.5px;line-height:26px;text-align:center;color:#30353f">B</div><div style="position:absolute;left:133px;top:176px;width:1px;height:22px;background:#dcdde1"></div><div style="position:absolute;left:133px;top:175px;width:81px;height:22px;font-size:15.5px;line-height:26px;text-align:center;color:#30353f">C</div><div style="position:absolute;left:214px;top:176px;width:1px;height:22px;background:#dcdde1"></div><div style="position:absolute;left:214px;top:175px;width:81px;height:22px;font-size:15.5px;line-height:26px;text-align:center;color:#30353f">D</div><div style="position:absolute;left:295px;top:176px;width:1px;height:22px;background:#dcdde1"></div><div style="position:absolute;left:295px;top:175px;width:81px;height:22px;font-size:15.5px;line-height:26px;text-align:center;color:#30353f">E</div><div style="position:absolute;left:376px;top:176px;width:1px;height:22px;background:#dcdde1"></div><div style="position:absolute;left:376px;top:175px;width:81px;height:22px;font-size:15.5px;line-height:26px;text-align:center;color:#30353f">F</div><div style="position:absolute;left:457px;top:176px;width:1px;height:22px;background:#dcdde1"></div><div style="position:absolute;left:457px;top:175px;width:81px;height:22px;font-size:15.5px;line-height:26px;text-align:center;color:#30353f">G</div><div style="position:absolute;left:538px;top:176px;width:1px;height:22px;background:#dcdde1"></div><div style="position:absolute;left:538px;top:175px;width:81px;height:22px;font-size:15.5px;line-height:26px;text-align:center;color:#30353f">H</div><div style="position:absolute;left:619px;top:176px;width:1px;height:22px;background:#dcdde1"></div><div style="position:absolute;left:619px;top:175px;width:81px;height:22px;font-size:15.5px;line-height:26px;text-align:center;color:#30353f">I</div><div style="position:absolute;left:700px;top:176px;width:1px;height:22px;background:#dcdde1"></div><div style="position:absolute;left:700px;top:175px;width:81px;height:22px;font-size:15.5px;line-height:26px;text-align:center;color:#30353f">J</div><div style="position:absolute;left:781px;top:176px;width:1px;height:22px;background:#dcdde1"></div><div style="position:absolute;left:781px;top:175px;width:81px;height:22px;font-size:15.5px;line-height:26px;text-align:center;color:#30353f">K</div><div style="position:absolute;left:862px;top:176px;width:1px;height:22px;background:#dcdde1"></div><div style="position:absolute;left:862px;top:175px;width:81px;height:22px;font-size:15.5px;line-height:26px;text-align:center;color:#30353f">L</div><div style="position:absolute;left:943px;top:176px;width:1px;height:22px;background:#dcdde1"></div><div style="position:absolute;left:943px;top:175px;width:81px;height:22px;font-size:15.5px;line-height:26px;text-align:center;color:#30353f">M</div><div style="position:absolute;left:1024px;top:176px;width:1px;height:22px;background:#dcdde1"></div><div style="position:absolute;left:1024px;top:175px;width:81px;height:22px;font-size:15.5px;line-height:26px;text-align:center;color:#30353f">N</div><div style="position:absolute;left:1105px;top:176px;width:1px;height:22px;background:#dcdde1"></div><div style="position:absolute;left:1105px;top:175px;width:81px;height:22px;font-size:15.5px;line-height:26px;text-align:center;color:#30353f">O</div><div style="position:absolute;left:1186px;top:176px;width:1px;height:22px;background:#dcdde1"></div><div style="position:absolute;left:1186px;top:175px;width:38px;height:22px;font-size:15.5px;line-height:26px;text-align:center;color:#30353f">P</div><div style="position:absolute;left:1224px;top:176px;width:1px;height:22px;background:#dcdde1"></div><div style="position:absolute;left:1224px;top:175px;width:30px;height:22px;font-size:15.5px;line-height:26px;text-align:center;color:#30353f">Q</div><div style="position:absolute;left:1254px;top:176px;width:1px;height:22px;background:#dcdde1"></div><div style="position:absolute;left:1254px;top:175px;width:29px;height:22px;font-size:15.5px;line-height:26px;text-align:center;color:#30353f">R</div><div style="position:absolute;left:1283px;top:176px;width:1px;height:22px;background:#dcdde1"></div><div style="position:absolute;left:1283px;top:175px;width:37px;height:22px;font-size:15.5px;line-height:26px;text-align:center;color:#30353f">S</div><svg style="position:absolute;left:0px;top:182px;width:14px;height:14px;" width="14" height="14" viewBox="0 0 14 14"><path d="M12 1V12H1Z" fill="#c5c7cc"/></svg><div style="position:absolute;left:0px;top:198px;width:17px;height:757px;background:#f3f4f6;border-right:1px solid #c6c8cc;box-sizing:border-box"></div><div style="position:absolute;left:0px;top:222px;width:16px;height:1px;background:#d7d8dc"></div><div style="position:absolute;left:-10px;top:198px;width:20px;height:24px;font-size:15px;line-height:24px;text-align:center;color:#30353f">1</div><div style="position:absolute;left:0px;top:287px;width:16px;height:1px;background:#d7d8dc"></div><div style="position:absolute;left:-10px;top:222px;width:20px;height:65px;font-size:15px;line-height:65px;text-align:center;color:#30353f">2</div><div style="position:absolute;left:0px;top:311px;width:16px;height:1px;background:#d7d8dc"></div><div style="position:absolute;left:-10px;top:287px;width:20px;height:24px;font-size:15px;line-height:24px;text-align:center;color:#30353f">3</div><div style="position:absolute;left:0px;top:347px;width:16px;height:1px;background:#d7d8dc"></div><div style="position:absolute;left:-10px;top:311px;width:20px;height:36px;font-size:15px;line-height:36px;text-align:center;color:#30353f">4</div><div style="position:absolute;left:0px;top:375px;width:16px;height:1px;background:#d7d8dc"></div><div style="position:absolute;left:-10px;top:347px;width:20px;height:28px;font-size:15px;line-height:28px;text-align:center;color:#30353f">5</div><div style="position:absolute;left:0px;top:403px;width:16px;height:1px;background:#d7d8dc"></div><div style="position:absolute;left:-10px;top:375px;width:20px;height:28px;font-size:15px;line-height:28px;text-align:center;color:#30353f">6</div><div style="position:absolute;left:0px;top:431px;width:16px;height:1px;background:#d7d8dc"></div><div style="position:absolute;left:-10px;top:403px;width:20px;height:28px;font-size:15px;line-height:28px;text-align:center;color:#30353f">7</div><div style="position:absolute;left:0px;top:459px;width:16px;height:1px;background:#d7d8dc"></div><div style="position:absolute;left:-10px;top:431px;width:20px;height:28px;font-size:15px;line-height:28px;text-align:center;color:#30353f">8</div><div style="position:absolute;left:0px;top:487px;width:16px;height:1px;background:#d7d8dc"></div><div style="position:absolute;left:-10px;top:459px;width:20px;height:28px;font-size:15px;line-height:28px;text-align:center;color:#30353f">9</div><div style="position:absolute;left:0px;top:515px;width:16px;height:1px;background:#d7d8dc"></div><div style="position:absolute;left:-10px;top:487px;width:20px;height:28px;font-size:15px;line-height:28px;text-align:center;color:#30353f">10</div><div style="position:absolute;left:0px;top:543px;width:16px;height:1px;background:#d7d8dc"></div><div style="position:absolute;left:-10px;top:515px;width:20px;height:28px;font-size:15px;line-height:28px;text-align:center;color:#30353f">11</div><div style="position:absolute;left:0px;top:571px;width:16px;height:1px;background:#d7d8dc"></div><div style="position:absolute;left:-10px;top:543px;width:20px;height:28px;font-size:15px;line-height:28px;text-align:center;color:#30353f">12</div><div style="position:absolute;left:0px;top:599px;width:16px;height:1px;background:#d7d8dc"></div><div style="position:absolute;left:-10px;top:571px;width:20px;height:28px;font-size:15px;line-height:28px;text-align:center;color:#30353f">13</div><div style="position:absolute;left:0px;top:631px;width:16px;height:1px;background:#d7d8dc"></div><div style="position:absolute;left:-10px;top:599px;width:20px;height:32px;font-size:15px;line-height:32px;text-align:center;color:#30353f">14</div><div style="position:absolute;left:0px;top:663px;width:16px;height:1px;background:#d7d8dc"></div><div style="position:absolute;left:-10px;top:631px;width:20px;height:32px;font-size:15px;line-height:32px;text-align:center;color:#30353f">15</div><div style="position:absolute;left:0px;top:695px;width:16px;height:1px;background:#d7d8dc"></div><div style="position:absolute;left:-10px;top:663px;width:20px;height:32px;font-size:15px;line-height:32px;text-align:center;color:#30353f">16</div><div style="position:absolute;left:0px;top:727px;width:16px;height:1px;background:#d7d8dc"></div><div style="position:absolute;left:-10px;top:695px;width:20px;height:32px;font-size:15px;line-height:32px;text-align:center;color:#30353f">17</div><div style="position:absolute;left:0px;top:759px;width:16px;height:1px;background:#d7d8dc"></div><div style="position:absolute;left:-10px;top:727px;width:20px;height:32px;font-size:15px;line-height:32px;text-align:center;color:#30353f">18</div><div style="position:absolute;left:0px;top:791px;width:16px;height:1px;background:#d7d8dc"></div><div style="position:absolute;left:-10px;top:759px;width:20px;height:32px;font-size:15px;line-height:32px;text-align:center;color:#30353f">19</div><div style="position:absolute;left:0px;top:823px;width:16px;height:1px;background:#d7d8dc"></div><div style="position:absolute;left:-10px;top:791px;width:20px;height:32px;font-size:15px;line-height:32px;text-align:center;color:#30353f">20</div><div style="position:absolute;left:0px;top:855px;width:16px;height:1px;background:#d7d8dc"></div><div style="position:absolute;left:-10px;top:823px;width:20px;height:32px;font-size:15px;line-height:32px;text-align:center;color:#30353f">21</div><div style="position:absolute;left:0px;top:855px;width:16px;height:32px;background:#d6d7dc"></div><div style="position:absolute;left:15px;top:855px;width:2px;height:32px;background:#21a366"></div><div style="position:absolute;left:0px;top:887px;width:16px;height:1px;background:#d7d8dc"></div><div style="position:absolute;left:-10px;top:855px;width:20px;height:32px;font-size:15px;line-height:32px;text-align:center;color:#30353f">22</div><div style="position:absolute;left:0px;top:919px;width:16px;height:1px;background:#d7d8dc"></div><div style="position:absolute;left:-10px;top:887px;width:20px;height:32px;font-size:15px;line-height:32px;text-align:center;color:#30353f">23</div><div style="position:absolute;left:0px;top:951px;width:16px;height:1px;background:#d7d8dc"></div><div style="position:absolute;left:-10px;top:919px;width:20px;height:32px;font-size:15px;line-height:32px;text-align:center;color:#30353f">24</div><div style="position:absolute;left:440px;top:237px;width:352px;height:36px;font-size:32px;line-height:36px;font-weight:bold;color:#000;white-space:nowrap;letter-spacing:0px">年度成本费用预算明细表</div><div style="position:absolute;left:1107px;top:289px;width:104px;height:18px;font-size:14.5px;line-height:18px;color:#000;letter-spacing:0.6px;white-space:nowrap">单位：万元</div><div style="position:absolute;left:46px;top:311px;width:1140px;height:36px;background:#7f63a4"></div><div style="position:absolute;left:45px;top:311px;width:88px;height:36px;font-size:14px;line-height:38px;font-weight:bold;color:#fff;text-align:center;letter-spacing:3px;text-indent:3px;">费用类型</div><div style="position:absolute;left:133px;top:311px;width:1px;height:36px;background:#ffffff"></div><div style="position:absolute;left:133px;top:311px;width:81px;height:36px;font-size:14px;line-height:38px;font-weight:bold;color:#fff;text-align:center;letter-spacing:1px;text-indent:1px;">1月</div><div style="position:absolute;left:214px;top:311px;width:1px;height:36px;background:#ffffff"></div><div style="position:absolute;left:214px;top:311px;width:81px;height:36px;font-size:14px;line-height:38px;font-weight:bold;color:#fff;text-align:center;letter-spacing:1px;text-indent:1px;">2月</div><div style="position:absolute;left:295px;top:311px;width:1px;height:36px;background:#ffffff"></div><div style="position:absolute;left:295px;top:311px;width:81px;height:36px;font-size:14px;line-height:38px;font-weight:bold;color:#fff;text-align:center;letter-spacing:1px;text-indent:1px;">3月</div><div style="position:absolute;left:376px;top:311px;width:1px;height:36px;background:#ffffff"></div><div style="position:absolute;left:376px;top:311px;width:81px;height:36px;font-size:14px;line-height:38px;font-weight:bold;color:#fff;text-align:center;letter-spacing:1px;text-indent:1px;">4月</div><div style="position:absolute;left:457px;top:311px;width:1px;height:36px;background:#ffffff"></div><div style="position:absolute;left:457px;top:311px;width:81px;height:36px;font-size:14px;line-height:38px;font-weight:bold;color:#fff;text-align:center;letter-spacing:1px;text-indent:1px;">5月</div><div style="position:absolute;left:538px;top:311px;width:1px;height:36px;background:#ffffff"></div><div style="position:absolute;left:538px;top:311px;width:81px;height:36px;font-size:14px;line-height:38px;font-weight:bold;color:#fff;text-align:center;letter-spacing:1px;text-indent:1px;">6月</div><div style="position:absolute;left:619px;top:311px;width:1px;height:36px;background:#ffffff"></div><div style="position:absolute;left:619px;top:311px;width:81px;height:36px;font-size:14px;line-height:38px;font-weight:bold;color:#fff;text-align:center;letter-spacing:1px;text-indent:1px;">7月</div><div style="position:absolute;left:700px;top:311px;width:1px;height:36px;background:#ffffff"></div><div style="position:absolute;left:700px;top:311px;width:81px;height:36px;font-size:14px;line-height:38px;font-weight:bold;color:#fff;text-align:center;letter-spacing:1px;text-indent:1px;">8月</div><div style="position:absolute;left:781px;top:311px;width:1px;height:36px;background:#ffffff"></div><div style="position:absolute;left:781px;top:311px;width:81px;height:36px;font-size:14px;line-height:38px;font-weight:bold;color:#fff;text-align:center;letter-spacing:1px;text-indent:1px;">9月</div><div style="position:absolute;left:862px;top:311px;width:1px;height:36px;background:#ffffff"></div><div style="position:absolute;left:862px;top:311px;width:81px;height:36px;font-size:14px;line-height:38px;font-weight:bold;color:#fff;text-align:center;letter-spacing:1px;text-indent:1px;">10月</div><div style="position:absolute;left:943px;top:311px;width:1px;height:36px;background:#ffffff"></div><div style="position:absolute;left:943px;top:311px;width:81px;height:36px;font-size:14px;line-height:38px;font-weight:bold;color:#fff;text-align:center;letter-spacing:1px;text-indent:1px;">11月</div><div style="position:absolute;left:1024px;top:311px;width:1px;height:36px;background:#ffffff"></div><div style="position:absolute;left:1024px;top:311px;width:81px;height:36px;font-size:14px;line-height:38px;font-weight:bold;color:#fff;text-align:center;letter-spacing:1px;text-indent:1px;">12月</div><div style="position:absolute;left:1105px;top:311px;width:1px;height:36px;background:#ffffff"></div><div style="position:absolute;left:1105px;top:311px;width:81px;height:36px;font-size:14px;line-height:38px;font-weight:bold;color:#fff;text-align:center;letter-spacing:1px;text-indent:1px;">合计</div><div style="position:absolute;left:45px;top:375px;width:1142px;height:1px;background:#c3c3c3"></div><div style="position:absolute;left:45px;top:347px;width:88px;height:28px;font-size:14px;line-height:31px;font-weight:bold;color:#000;text-align:center;letter-spacing:3px;text-indent:3px;">差旅费</div><div style="position:absolute;left:133px;top:347px;width:81px;height:28px;font-size:16px;line-height:29px;color:#000;text-align:center">20.00</div><div style="position:absolute;left:214px;top:347px;width:81px;height:28px;font-size:16px;line-height:29px;color:#000;text-align:center">40.00</div><div style="position:absolute;left:295px;top:347px;width:81px;height:28px;font-size:16px;line-height:29px;color:#000;text-align:center">30.00</div><div style="position:absolute;left:376px;top:347px;width:81px;height:28px;font-size:16px;line-height:29px;color:#000;text-align:center">25.00</div><div style="position:absolute;left:457px;top:347px;width:81px;height:28px;font-size:16px;line-height:29px;color:#000;text-align:center">25.00</div><div style="position:absolute;left:538px;top:347px;width:81px;height:28px;font-size:16px;line-height:29px;color:#000;text-align:center">15.00</div><div style="position:absolute;left:619px;top:347px;width:81px;height:28px;font-size:16px;line-height:29px;color:#000;text-align:center">23.00</div><div style="position:absolute;left:700px;top:347px;width:81px;height:28px;font-size:16px;line-height:29px;color:#000;text-align:center">22.00</div><div style="position:absolute;left:781px;top:347px;width:81px;height:28px;font-size:16px;line-height:29px;color:#000;text-align:center">23.00</div><div style="position:absolute;left:862px;top:347px;width:81px;height:28px;font-size:16px;line-height:29px;color:#000;text-align:center">15.00</div><div style="position:absolute;left:943px;top:347px;width:81px;height:28px;font-size:16px;line-height:29px;color:#000;text-align:center">20.00</div><div style="position:absolute;left:1024px;top:347px;width:81px;height:28px;font-size:16px;line-height:29px;color:#000;text-align:center">32.00</div><div style="position:absolute;left:1105px;top:347px;width:81px;height:28px;font-size:16px;line-height:29px;color:#000;text-align:center">290.00</div><div style="position:absolute;left:45px;top:403px;width:1142px;height:1px;background:#c3c3c3"></div><div style="position:absolute;left:45px;top:375px;width:88px;height:28px;font-size:14px;line-height:31px;font-weight:bold;color:#000;text-align:center;letter-spacing:3px;text-indent:3px;">办公费</div><div style="position:absolute;left:133px;top:375px;width:81px;height:28px;font-size:16px;line-height:29px;color:#000;text-align:center">30.00</div><div style="position:absolute;left:214px;top:375px;width:81px;height:28px;font-size:16px;line-height:29px;color:#000;text-align:center">35.00</div><div style="position:absolute;left:295px;top:375px;width:81px;height:28px;font-size:16px;line-height:29px;color:#000;text-align:center">45.00</div><div style="position:absolute;left:376px;top:375px;width:81px;height:28px;font-size:16px;line-height:29px;color:#000;text-align:center">55.00</div><div style="position:absolute;left:457px;top:375px;width:81px;height:28px;font-size:16px;line-height:29px;color:#000;text-align:center">23.00</div><div style="position:absolute;left:538px;top:375px;width:81px;height:28px;font-size:16px;line-height:29px;color:#000;text-align:center">35.00</div><div style="position:absolute;left:619px;top:375px;width:81px;height:28px;font-size:16px;line-height:29px;color:#000;text-align:center">35.00</div><div style="position:absolute;left:700px;top:375px;width:81px;height:28px;font-size:16px;line-height:29px;color:#000;text-align:center">36.00</div><div style="position:absolute;left:781px;top:375px;width:81px;height:28px;font-size:16px;line-height:29px;color:#000;text-align:center">38.00</div><div style="position:absolute;left:862px;top:375px;width:81px;height:28px;font-size:16px;line-height:29px;color:#000;text-align:center">40.00</div><div style="position:absolute;left:943px;top:375px;width:81px;height:28px;font-size:16px;line-height:29px;color:#000;text-align:center">42.00</div><div style="position:absolute;left:1024px;top:375px;width:81px;height:28px;font-size:16px;line-height:29px;color:#000;text-align:center">55.00</div><div style="position:absolute;left:1105px;top:375px;width:81px;height:28px;font-size:16px;line-height:29px;color:#000;text-align:center">469.00</div><div style="position:absolute;left:45px;top:431px;width:1142px;height:1px;background:#c3c3c3"></div><div style="position:absolute;left:45px;top:403px;width:88px;height:28px;font-size:14px;line-height:31px;font-weight:bold;color:#000;text-align:center;letter-spacing:3px;text-indent:3px;">招待费</div><div style="position:absolute;left:133px;top:403px;width:81px;height:28px;font-size:16px;line-height:29px;color:#000;text-align:center">52.00</div><div style="position:absolute;left:214px;top:403px;width:81px;height:28px;font-size:16px;line-height:29px;color:#000;text-align:center">36.00</div><div style="position:absolute;left:295px;top:403px;width:81px;height:28px;font-size:16px;line-height:29px;color:#000;text-align:center">45.00</div><div style="position:absolute;left:376px;top:403px;width:81px;height:28px;font-size:16px;line-height:29px;color:#000;text-align:center">49.00</div><div style="position:absolute;left:457px;top:403px;width:81px;height:28px;font-size:16px;line-height:29px;color:#000;text-align:center">36.00</div><div style="position:absolute;left:538px;top:403px;width:81px;height:28px;font-size:16px;line-height:29px;color:#000;text-align:center">55.00</div><div style="position:absolute;left:619px;top:403px;width:81px;height:28px;font-size:16px;line-height:29px;color:#000;text-align:center">45.00</div><div style="position:absolute;left:700px;top:403px;width:81px;height:28px;font-size:16px;line-height:29px;color:#000;text-align:center">35.00</div><div style="position:absolute;left:781px;top:403px;width:81px;height:28px;font-size:16px;line-height:29px;color:#000;text-align:center">56.00</div><div style="position:absolute;left:862px;top:403px;width:81px;height:28px;font-size:16px;line-height:29px;color:#000;text-align:center">32.00</div><div style="position:absolute;left:943px;top:403px;width:81px;height:28px;font-size:16px;line-height:29px;color:#000;text-align:center">45.00</div><div style="position:absolute;left:1024px;top:403px;width:81px;height:28px;font-size:16px;line-height:29px;color:#000;text-align:center">36.00</div><div style="position:absolute;left:1105px;top:403px;width:81px;height:28px;font-size:16px;line-height:29px;color:#000;text-align:center">522.00</div><div style="position:absolute;left:45px;top:459px;width:1142px;height:1px;background:#c3c3c3"></div><div style="position:absolute;left:45px;top:431px;width:88px;height:28px;font-size:14px;line-height:31px;font-weight:bold;color:#000;text-align:center;letter-spacing:3px;text-indent:3px;">广告费</div><div style="position:absolute;left:133px;top:431px;width:81px;height:28px;font-size:16px;line-height:29px;color:#000;text-align:center">55.00</div><div style="position:absolute;left:214px;top:431px;width:81px;height:28px;font-size:16px;line-height:29px;color:#000;text-align:center">82.00</div><div style="position:absolute;left:295px;top:431px;width:81px;height:28px;font-size:16px;line-height:29px;color:#000;text-align:center">62.00</div><div style="position:absolute;left:376px;top:431px;width:81px;height:28px;font-size:16px;line-height:29px;color:#000;text-align:center">63.00</div><div style="position:absolute;left:457px;top:431px;width:81px;height:28px;font-size:16px;line-height:29px;color:#000;text-align:center">56.00</div><div style="position:absolute;left:538px;top:431px;width:81px;height:28px;font-size:16px;line-height:29px;color:#000;text-align:center">65.00</div><div style="position:absolute;left:619px;top:431px;width:81px;height:28px;font-size:16px;line-height:29px;color:#000;text-align:center">63.00</div><div style="position:absolute;left:700px;top:431px;width:81px;height:28px;font-size:16px;line-height:29px;color:#000;text-align:center">55.00</div><div style="position:absolute;left:781px;top:431px;width:81px;height:28px;font-size:16px;line-height:29px;color:#000;text-align:center">62.00</div><div style="position:absolute;left:862px;top:431px;width:81px;height:28px;font-size:16px;line-height:29px;color:#000;text-align:center">65.00</div><div style="position:absolute;left:943px;top:431px;width:81px;height:28px;font-size:16px;line-height:29px;color:#000;text-align:center">65.00</div><div style="position:absolute;left:1024px;top:431px;width:81px;height:28px;font-size:16px;line-height:29px;color:#000;text-align:center">66.00</div><div style="position:absolute;left:1105px;top:431px;width:81px;height:28px;font-size:16px;line-height:29px;color:#000;text-align:center">759.00</div><div style="position:absolute;left:45px;top:487px;width:1142px;height:1px;background:#c3c3c3"></div><div style="position:absolute;left:45px;top:459px;width:88px;height:28px;font-size:14px;line-height:31px;font-weight:bold;color:#000;text-align:center;letter-spacing:3px;text-indent:3px;">交通费</div><div style="position:absolute;left:133px;top:459px;width:81px;height:28px;font-size:16px;line-height:29px;color:#000;text-align:center">23.00</div><div style="position:absolute;left:214px;top:459px;width:81px;height:28px;font-size:16px;line-height:29px;color:#000;text-align:center">26.00</div><div style="position:absolute;left:295px;top:459px;width:81px;height:28px;font-size:16px;line-height:29px;color:#000;text-align:center">32.00</div><div style="position:absolute;left:376px;top:459px;width:81px;height:28px;font-size:16px;line-height:29px;color:#000;text-align:center">18.00</div><div style="position:absolute;left:457px;top:459px;width:81px;height:28px;font-size:16px;line-height:29px;color:#000;text-align:center">22.00</div><div style="position:absolute;left:538px;top:459px;width:81px;height:28px;font-size:16px;line-height:29px;color:#000;text-align:center">25.00</div><div style="position:absolute;left:619px;top:459px;width:81px;height:28px;font-size:16px;line-height:29px;color:#000;text-align:center">30.00</div><div style="position:absolute;left:700px;top:459px;width:81px;height:28px;font-size:16px;line-height:29px;color:#000;text-align:center">25.00</div><div style="position:absolute;left:781px;top:459px;width:81px;height:28px;font-size:16px;line-height:29px;color:#000;text-align:center">31.00</div><div style="position:absolute;left:862px;top:459px;width:81px;height:28px;font-size:16px;line-height:29px;color:#000;text-align:center">24.00</div><div style="position:absolute;left:943px;top:459px;width:81px;height:28px;font-size:16px;line-height:29px;color:#000;text-align:center">30.00</div><div style="position:absolute;left:1024px;top:459px;width:81px;height:28px;font-size:16px;line-height:29px;color:#000;text-align:center">25.00</div><div style="position:absolute;left:1105px;top:459px;width:81px;height:28px;font-size:16px;line-height:29px;color:#000;text-align:center">311.00</div><div style="position:absolute;left:45px;top:515px;width:1142px;height:1px;background:#c3c3c3"></div><div style="position:absolute;left:45px;top:487px;width:88px;height:28px;font-size:14px;line-height:31px;font-weight:bold;color:#000;text-align:center;letter-spacing:3px;text-indent:3px;">通讯费</div><div style="position:absolute;left:133px;top:487px;width:81px;height:28px;font-size:16px;line-height:29px;color:#000;text-align:center">10.00</div><div style="position:absolute;left:214px;top:487px;width:81px;height:28px;font-size:16px;line-height:29px;color:#000;text-align:center">6.00</div><div style="position:absolute;left:295px;top:487px;width:81px;height:28px;font-size:16px;line-height:29px;color:#000;text-align:center">7.00</div><div style="position:absolute;left:376px;top:487px;width:81px;height:28px;font-size:16px;line-height:29px;color:#000;text-align:center">8.00</div><div style="position:absolute;left:457px;top:487px;width:81px;height:28px;font-size:16px;line-height:29px;color:#000;text-align:center">6.00</div><div style="position:absolute;left:538px;top:487px;width:81px;height:28px;font-size:16px;line-height:29px;color:#000;text-align:center">7.00</div><div style="position:absolute;left:619px;top:487px;width:81px;height:28px;font-size:16px;line-height:29px;color:#000;text-align:center">5.00</div><div style="position:absolute;left:700px;top:487px;width:81px;height:28px;font-size:16px;line-height:29px;color:#000;text-align:center">8.00</div><div style="position:absolute;left:781px;top:487px;width:81px;height:28px;font-size:16px;line-height:29px;color:#000;text-align:center">5.00</div><div style="position:absolute;left:862px;top:487px;width:81px;height:28px;font-size:16px;line-height:29px;color:#000;text-align:center">6.00</div><div style="position:absolute;left:943px;top:487px;width:81px;height:28px;font-size:16px;line-height:29px;color:#000;text-align:center">8.00</div><div style="position:absolute;left:1024px;top:487px;width:81px;height:28px;font-size:16px;line-height:29px;color:#000;text-align:center">10.00</div><div style="position:absolute;left:1105px;top:487px;width:81px;height:28px;font-size:16px;line-height:29px;color:#000;text-align:center">86.00</div><div style="position:absolute;left:45px;top:543px;width:1142px;height:1px;background:#c3c3c3"></div><div style="position:absolute;left:45px;top:515px;width:88px;height:28px;font-size:14px;line-height:31px;font-weight:bold;color:#000;text-align:center;letter-spacing:3px;text-indent:3px;">折旧费</div><div style="position:absolute;left:133px;top:515px;width:81px;height:28px;font-size:16px;line-height:29px;color:#000;text-align:center">5.00</div><div style="position:absolute;left:214px;top:515px;width:81px;height:28px;font-size:16px;line-height:29px;color:#000;text-align:center">8.00</div><div style="position:absolute;left:295px;top:515px;width:81px;height:28px;font-size:16px;line-height:29px;color:#000;text-align:center">9.00</div><div style="position:absolute;left:376px;top:515px;width:81px;height:28px;font-size:16px;line-height:29px;color:#000;text-align:center">6.00</div><div style="position:absolute;left:457px;top:515px;width:81px;height:28px;font-size:16px;line-height:29px;color:#000;text-align:center">7.00</div><div style="position:absolute;left:538px;top:515px;width:81px;height:28px;font-size:16px;line-height:29px;color:#000;text-align:center">5.00</div><div style="position:absolute;left:619px;top:515px;width:81px;height:28px;font-size:16px;line-height:29px;color:#000;text-align:center">6.00</div><div style="position:absolute;left:700px;top:515px;width:81px;height:28px;font-size:16px;line-height:29px;color:#000;text-align:center">7.00</div><div style="position:absolute;left:781px;top:515px;width:81px;height:28px;font-size:16px;line-height:29px;color:#000;text-align:center">6.00</div><div style="position:absolute;left:862px;top:515px;width:81px;height:28px;font-size:16px;line-height:29px;color:#000;text-align:center">7.00</div><div style="position:absolute;left:943px;top:515px;width:81px;height:28px;font-size:16px;line-height:29px;color:#000;text-align:center">8.00</div><div style="position:absolute;left:1024px;top:515px;width:81px;height:28px;font-size:16px;line-height:29px;color:#000;text-align:center">8.00</div><div style="position:absolute;left:1105px;top:515px;width:81px;height:28px;font-size:16px;line-height:29px;color:#000;text-align:center">82.00</div><div style="position:absolute;left:45px;top:571px;width:1142px;height:1px;background:#c3c3c3"></div><div style="position:absolute;left:45px;top:543px;width:88px;height:28px;font-size:14px;line-height:31px;font-weight:bold;color:#000;text-align:center;letter-spacing:3px;text-indent:3px;">合计</div><div style="position:absolute;left:133px;top:543px;width:81px;height:28px;font-size:16px;line-height:29px;color:#000;text-align:center">195.00</div><div style="position:absolute;left:214px;top:543px;width:81px;height:28px;font-size:16px;line-height:29px;color:#000;text-align:center">233.00</div><div style="position:absolute;left:295px;top:543px;width:81px;height:28px;font-size:16px;line-height:29px;color:#000;text-align:center">230.00</div><div style="position:absolute;left:376px;top:543px;width:81px;height:28px;font-size:16px;line-height:29px;color:#000;text-align:center">224.00</div><div style="position:absolute;left:457px;top:543px;width:81px;height:28px;font-size:16px;line-height:29px;color:#000;text-align:center">175.00</div><div style="position:absolute;left:538px;top:543px;width:81px;height:28px;font-size:16px;line-height:29px;color:#000;text-align:center">207.00</div><div style="position:absolute;left:619px;top:543px;width:81px;height:28px;font-size:16px;line-height:29px;color:#000;text-align:center">207.00</div><div style="position:absolute;left:700px;top:543px;width:81px;height:28px;font-size:16px;line-height:29px;color:#000;text-align:center">188.00</div><div style="position:absolute;left:781px;top:543px;width:81px;height:28px;font-size:16px;line-height:29px;color:#000;text-align:center">221.00</div><div style="position:absolute;left:862px;top:543px;width:81px;height:28px;font-size:16px;line-height:29px;color:#000;text-align:center">189.00</div><div style="position:absolute;left:943px;top:543px;width:81px;height:28px;font-size:16px;line-height:29px;color:#000;text-align:center">218.00</div><div style="position:absolute;left:1024px;top:543px;width:81px;height:28px;font-size:16px;line-height:29px;color:#000;text-align:center">232.00</div><div style="position:absolute;left:1105px;top:543px;width:81px;height:28px;font-size:16px;line-height:29px;color:#000;text-align:center">2,519.00</div><div style="position:absolute;left:45px;top:347px;width:1px;height:225px;background:#c3c3c3"></div><div style="position:absolute;left:133px;top:347px;width:1px;height:225px;background:#c3c3c3"></div><div style="position:absolute;left:214px;top:347px;width:1px;height:225px;background:#c3c3c3"></div><div style="position:absolute;left:295px;top:347px;width:1px;height:225px;background:#c3c3c3"></div><div style="position:absolute;left:376px;top:347px;width:1px;height:225px;background:#c3c3c3"></div><div style="position:absolute;left:457px;top:347px;width:1px;height:225px;background:#c3c3c3"></div><div style="position:absolute;left:538px;top:347px;width:1px;height:225px;background:#c3c3c3"></div><div style="position:absolute;left:619px;top:347px;width:1px;height:225px;background:#c3c3c3"></div><div style="position:absolute;left:700px;top:347px;width:1px;height:225px;background:#c3c3c3"></div><div style="position:absolute;left:781px;top:347px;width:1px;height:225px;background:#c3c3c3"></div><div style="position:absolute;left:862px;top:347px;width:1px;height:225px;background:#c3c3c3"></div><div style="position:absolute;left:943px;top:347px;width:1px;height:225px;background:#c3c3c3"></div><div style="position:absolute;left:1024px;top:347px;width:1px;height:225px;background:#c3c3c3"></div><div style="position:absolute;left:1105px;top:347px;width:1px;height:225px;background:#c3c3c3"></div><div style="position:absolute;left:1186px;top:347px;width:1px;height:225px;background:#c3c3c3"></div><svg style="position:absolute;left:0px;top:0px;width:1286px;height:987px;pointer-events:none;" width="1286" height="987" viewBox="0 0 1286 987"><path d="M167.97 609.00A125.09999999999991 125.09999999999991 0 0 1 193.49 609.83L192.11 620.04A114.79999999999995 114.79999999999995 0 0 0 168.69 619.28Z" fill="#4b3b60"/><path d="M168.69 619.28A114.79999999999995 114.79999999999995 0 0 1 193.24 620.20L191.66 631.08A103.79999999999995 103.79999999999995 0 0 0 169.46 630.25Z" fill="#5f4a80"/><path d="M169.46 630.25A103.79999999999995 103.79999999999995 0 0 1 244.01 654.79L237.53 662.40A93.79999999999995 93.79999999999995 0 0 0 170.16 640.23Z" fill="#ab9cc8"/><path d="M170.16 640.23A93.79999999999995 93.79999999999995 0 0 1 267.54 757.17L255.92 754.18A81.79999999999995 81.79999999999995 0 0 0 170.99 652.20Z" fill="#c9bdda"/><path d="M170.99 652.20A81.79999999999995 81.79999999999995 0 0 1 253.84 706.59L244.03 710.05A71.39999999999998 71.39999999999998 0 0 0 171.72 662.57Z" fill="#e3dcec"/><path d="M171.72 662.57A71.39999999999998 71.39999999999998 0 0 1 240.32 701.39L230.87 706.20A60.799999999999955 60.799999999999955 0 0 0 172.46 673.15Z" fill="#7e62a3"/><path d="M172.46 673.15A60.799999999999955 60.799999999999955 0 0 1 213.65 685.52L207.33 693.78A50.39999999999998 50.39999999999998 0 0 0 173.18 683.52Z" fill="#ae9fca"/></svg><div style="position:absolute;left:100px;top:604.5px;width:49px;height:18px;font-size:12px;line-height:18px;color:#111;text-align:right;white-space:nowrap">折旧费</div><div style="position:absolute;left:100px;top:621.5px;width:49px;height:18px;font-size:12px;line-height:18px;color:#111;text-align:right;white-space:nowrap">通讯费</div><div style="position:absolute;left:100px;top:638.7px;width:49px;height:18px;font-size:12px;line-height:18px;color:#111;text-align:right;white-space:nowrap">交通费</div><div style="position:absolute;left:100px;top:656.2px;width:49px;height:18px;font-size:12px;line-height:18px;color:#111;text-align:right;white-space:nowrap">广告费</div><div style="position:absolute;left:100px;top:673.2px;width:49px;height:18px;font-size:12px;line-height:18px;color:#111;text-align:right;white-space:nowrap">招待费</div><div style="position:absolute;left:100px;top:693.5px;width:49px;height:18px;font-size:12px;line-height:18px;color:#111;text-align:right;white-space:nowrap">办公费</div><div style="position:absolute;left:100px;top:714.7px;width:49px;height:18px;font-size:12px;line-height:18px;color:#111;text-align:right;white-space:nowrap">差旅费</div><svg style="position:absolute;left:0px;top:0px;width:1286px;height:987px;pointer-events:none;" width="1286" height="987" viewBox="0 0 1286 987"><path d="M416 742.3H1141" stroke="#d9d9d9" stroke-width="1"/><defs><linearGradient id="sh" x1="0" x2="1"><stop offset="0" stop-color="#6e6e72" stop-opacity="0.9"/><stop offset="0.4" stop-color="#9a9a9e" stop-opacity="0.6"/><stop offset="1" stop-color="#dddddd" stop-opacity="0"/></linearGradient></defs><rect x="460.0" y="628.4" width="6.5" height="113.9" fill="url(#sh)"/><rect x="432.5" y="626.9" width="27.5" height="115.4" fill="#e3deea"/><rect x="434.2" y="628.6" width="24.1" height="113.0" fill="none" stroke="#f4effa" stroke-width="1"/><rect x="520.5" y="605.9" width="6.5" height="136.4" fill="url(#sh)"/><rect x="492.9" y="604.4" width="27.5" height="137.9" fill="#e3deea"/><rect x="494.6" y="606.1" width="24.1" height="135.5" fill="none" stroke="#f4effa" stroke-width="1"/><rect x="580.9" y="607.6" width="6.5" height="134.7" fill="url(#sh)"/><rect x="553.4" y="606.1" width="27.5" height="136.2" fill="#e3deea"/><rect x="555.1" y="607.8" width="24.1" height="133.8" fill="none" stroke="#f4effa" stroke-width="1"/><rect x="641.4" y="611.2" width="6.5" height="131.1" fill="url(#sh)"/><rect x="613.9" y="609.7" width="27.5" height="132.6" fill="#cabfdb"/><rect x="615.6" y="611.4" width="24.1" height="130.2" fill="none" stroke="#f4effa" stroke-width="1"/><rect x="701.8" y="640.2" width="6.5" height="102.1" fill="url(#sh)"/><rect x="674.3" y="638.7" width="27.5" height="103.6" fill="#cabfdb"/><rect x="676.0" y="640.4" width="24.1" height="101.2" fill="none" stroke="#f4effa" stroke-width="1"/><rect x="762.2" y="621.3" width="6.5" height="121.0" fill="url(#sh)"/><rect x="734.8" y="619.8" width="27.5" height="122.5" fill="#cabfdb"/><rect x="736.5" y="621.5" width="24.1" height="120.1" fill="none" stroke="#f4effa" stroke-width="1"/><rect x="822.7" y="621.3" width="6.5" height="121.0" fill="url(#sh)"/><rect x="795.2" y="619.8" width="27.5" height="122.5" fill="#ae9fca"/><rect x="796.9" y="621.5" width="24.1" height="120.1" fill="none" stroke="#f4effa" stroke-width="1"/><rect x="883.2" y="632.5" width="6.5" height="109.8" fill="url(#sh)"/><rect x="855.7" y="631.0" width="27.5" height="111.3" fill="#ae9fca"/><rect x="857.4" y="632.7" width="24.1" height="108.9" fill="none" stroke="#f4effa" stroke-width="1"/><rect x="943.6" y="613.0" width="6.5" height="129.3" fill="url(#sh)"/><rect x="916.1" y="611.5" width="27.5" height="130.8" fill="#ae9fca"/><rect x="917.8" y="613.2" width="24.1" height="128.4" fill="none" stroke="#f4effa" stroke-width="1"/><rect x="1004.1" y="631.9" width="6.5" height="110.4" fill="url(#sh)"/><rect x="976.6" y="630.4" width="27.5" height="111.9" fill="#5e497e"/><rect x="978.3" y="632.1" width="24.1" height="109.5" fill="none" stroke="#f4effa" stroke-width="1"/><rect x="1064.5" y="614.7" width="6.5" height="127.6" fill="url(#sh)"/><rect x="1037.0" y="613.2" width="27.5" height="129.1" fill="#5e497e"/><rect x="1038.7" y="614.9" width="24.1" height="126.7" fill="none" stroke="#f4effa" stroke-width="1"/><rect x="1125.0" y="606.5" width="6.5" height="135.8" fill="url(#sh)"/><rect x="1097.5" y="605.0" width="27.5" height="137.3" fill="#5e497e"/><rect x="1099.2" y="606.7" width="24.1" height="134.9" fill="none" stroke="#f4effa" stroke-width="1"/><path d="M446.5 626.9 L506.9 604.4 L567.4 606.1 L627.9 609.7 L688.3 638.7 L748.8 619.8 L809.2 619.8 L869.7 631.0 L930.1 611.5 L990.6 630.4 L1051.0 613.2 L1111.5 605.0" fill="none" stroke="#ee8c3e" stroke-width="3.2" stroke-linejoin="round"/><path d="M442.5 623.8599999999999L450.5 629.8599999999999M442.5 629.8599999999999L450.5 623.8599999999999" stroke="#ee8c3e" stroke-width="1.3"/><path d="M502.95 601.3639999999999L510.95 607.3639999999999M502.95 607.3639999999999L510.95 601.3639999999999" stroke="#ee8c3e" stroke-width="1.3"/><path d="M563.4 603.14L571.4 609.14M563.4 609.14L571.4 603.14" stroke="#ee8c3e" stroke-width="1.3"/><path d="M623.85 606.692L631.85 612.692M623.85 612.692L631.85 606.692" stroke="#ee8c3e" stroke-width="1.3"/><path d="M684.3 635.6999999999999L692.3 641.6999999999999M684.3 641.6999999999999L692.3 635.6999999999999" stroke="#ee8c3e" stroke-width="1.3"/><path d="M744.75 616.756L752.75 622.756M744.75 622.756L752.75 616.756" stroke="#ee8c3e" stroke-width="1.3"/><path d="M805.2 616.756L813.2 622.756M805.2 622.756L813.2 616.756" stroke="#ee8c3e" stroke-width="1.3"/><path d="M865.6500000000001 628.0039999999999L873.6500000000001 634.0039999999999M865.6500000000001 634.0039999999999L873.6500000000001 628.0039999999999" stroke="#ee8c3e" stroke-width="1.3"/><path d="M926.1 608.468L934.1 614.468M926.1 614.468L934.1 608.468" stroke="#ee8c3e" stroke-width="1.3"/><path d="M986.5500000000001 627.4119999999999L994.5500000000001 633.4119999999999M986.5500000000001 633.4119999999999L994.5500000000001 627.4119999999999" stroke="#ee8c3e" stroke-width="1.3"/><path d="M1047.0 610.2439999999999L1055.0 616.2439999999999M1047.0 616.2439999999999L1055.0 610.2439999999999" stroke="#ee8c3e" stroke-width="1.3"/><path d="M1107.45 601.9559999999999L1115.45 607.9559999999999M1107.45 607.9559999999999L1115.45 601.9559999999999" stroke="#ee8c3e" stroke-width="1.3"/></svg><div style="position:absolute;left:340px;top:586.4px;width:68px;height:16px;font-size:11px;line-height:16px;color:#595959;text-align:right;white-space:nowrap">250. 00</div><div style="position:absolute;left:340px;top:616.0px;width:68px;height:16px;font-size:11px;line-height:16px;color:#595959;text-align:right;white-space:nowrap">200. 00</div><div style="position:absolute;left:340px;top:645.6px;width:68px;height:16px;font-size:11px;line-height:16px;color:#595959;text-align:right;white-space:nowrap">150. 00</div><div style="position:absolute;left:340px;top:675.2px;width:68px;height:16px;font-size:11px;line-height:16px;color:#595959;text-align:right;white-space:nowrap">100. 00</div><div style="position:absolute;left:340px;top:704.8px;width:68px;height:16px;font-size:11px;line-height:16px;color:#595959;text-align:right;white-space:nowrap">50. 00</div><div style="position:absolute;left:340px;top:734.4px;width:68px;height:16px;font-size:11px;line-height:16px;color:#595959;text-align:right;white-space:nowrap">0. 00</div><div style="position:absolute;left:426.5px;top:749px;width:40px;height:16px;font-size:11px;line-height:16px;color:#595959;text-align:center">1月</div><div style="position:absolute;left:486.95px;top:749px;width:40px;height:16px;font-size:11px;line-height:16px;color:#595959;text-align:center">2月</div><div style="position:absolute;left:547.4px;top:749px;width:40px;height:16px;font-size:11px;line-height:16px;color:#595959;text-align:center">3月</div><div style="position:absolute;left:607.85px;top:749px;width:40px;height:16px;font-size:11px;line-height:16px;color:#595959;text-align:center">4月</div><div style="position:absolute;left:668.3px;top:749px;width:40px;height:16px;font-size:11px;line-height:16px;color:#595959;text-align:center">5月</div><div style="position:absolute;left:728.75px;top:749px;width:40px;height:16px;font-size:11px;line-height:16px;color:#595959;text-align:center">6月</div><div style="position:absolute;left:789.2px;top:749px;width:40px;height:16px;font-size:11px;line-height:16px;color:#595959;text-align:center">7月</div><div style="position:absolute;left:849.6500000000001px;top:749px;width:40px;height:16px;font-size:11px;line-height:16px;color:#595959;text-align:center">8月</div><div style="position:absolute;left:910.1px;top:749px;width:40px;height:16px;font-size:11px;line-height:16px;color:#595959;text-align:center">9月</div><div style="position:absolute;left:970.5500000000001px;top:749px;width:40px;height:16px;font-size:11px;line-height:16px;color:#595959;text-align:center">10月</div><div style="position:absolute;left:1031.0px;top:749px;width:40px;height:16px;font-size:11px;line-height:16px;color:#595959;text-align:center">11月</div><div style="position:absolute;left:1091.45px;top:749px;width:40px;height:16px;font-size:11px;line-height:16px;color:#595959;text-align:center">12月</div><svg style="position:absolute;left:0px;top:0px;width:1286px;height:955px;pointer-events:none;" width="1286" height="955" viewBox="0 0 1286 955"><rect x="106.9" y="945.9" width="3" height="9.1" fill="#bbadd2"/><circle cx="108.4" cy="945.9" r="18.6" fill="#7f63a4"/><rect x="165.0" y="909.5" width="3" height="45.5" fill="#bbadd2"/><circle cx="166.5" cy="909.5" r="18.6" fill="#7f63a4"/><rect x="223.1" y="898.7" width="3" height="56.3" fill="#bbadd2"/><circle cx="224.6" cy="898.7" r="18.6" fill="#7f63a4"/><rect x="281.2" y="850.4" width="3" height="104.6" fill="#bbadd2"/><circle cx="282.7" cy="850.4" r="18.6" fill="#7f63a4"/><rect x="339.3" y="941.7" width="3" height="13.3" fill="#bbadd2"/><circle cx="340.8" cy="941.7" r="18.6" fill="#7f63a4"/><rect x="397.4" y="987.5" width="3" height="-32.5" fill="#bbadd2"/><circle cx="398.9" cy="987.5" r="18.6" fill="#7f63a4"/><rect x="455.5" y="988.3" width="3" height="-33.3" fill="#bbadd2"/><circle cx="457.0" cy="988.3" r="18.6" fill="#7f63a4"/></svg><div style="position:absolute;left:20px;top:833.1px;width:52px;height:16px;font-size:12px;line-height:16px;color:#595959;text-align:right;white-space:nowrap">800.00</div><div style="position:absolute;left:20px;top:853.48px;width:52px;height:16px;font-size:12px;line-height:16px;color:#595959;text-align:right;white-space:nowrap">700.00</div><div style="position:absolute;left:20px;top:873.86px;width:52px;height:16px;font-size:12px;line-height:16px;color:#595959;text-align:right;white-space:nowrap">600.00</div><div style="position:absolute;left:20px;top:894.24px;width:52px;height:16px;font-size:12px;line-height:16px;color:#595959;text-align:right;white-space:nowrap">500.00</div><div style="position:absolute;left:20px;top:914.62px;width:52px;height:16px;font-size:12px;line-height:16px;color:#595959;text-align:right;white-space:nowrap">400.00</div><div style="position:absolute;left:20px;top:935.0px;width:52px;height:16px;font-size:12px;line-height:16px;color:#595959;text-align:right;white-space:nowrap">300.00</div><svg style="position:absolute;left:0px;top:0px;width:1286px;height:955px;pointer-events:none;" width="1286" height="955" viewBox="0 0 1286 955"><circle cx="564.4" cy="927" r="70.6" fill="none" stroke="#eff0f0" stroke-width="17.999999999999993"/><path d="M488.29 942.80A75.4 75.4 0 0 1 559.34 844.10L559.56 869.60A49.9 49.9 0 0 0 512.54 934.92Z" fill="#cbbfdb"/><path d="M561.5 843.1L560.9 870.6" stroke="#ffffff" stroke-width="2.2"/><path d="M558.7 844.6L563.5 844.7" stroke="#cbbfdb" stroke-width="1.6" stroke-linecap="round"/><path d="M559.1 868.8L562.4 868.9" stroke="#cbbfdb" stroke-width="1.6" stroke-linecap="round"/><circle cx="758" cy="932.7" r="71.15" fill="none" stroke="#eff0f0" stroke-width="17.700000000000003"/><path d="M681.29 956.43A85 85 0 0 1 729.79 854.76L740.92 880.99A56.5 56.5 0 0 0 708.69 948.57Z" fill="#ae9fca"/><path d="M731.6 852.9L742.7 881.3" stroke="#ffffff" stroke-width="2.2"/><path d="M729.3 855.5L734.4 853.5" stroke="#ae9fca" stroke-width="1.6" stroke-linecap="round"/><path d="M740.2 880.5L743.6 879.1" stroke="#ae9fca" stroke-width="1.6" stroke-linecap="round"/><circle cx="942.6" cy="936.7" r="71.4" fill="none" stroke="#eff0f0" stroke-width="17.799999999999997"/><path d="M870.17 966.34A79.5 79.5 0 0 1 913.66 860.03L923.01 883.76A54 54 0 0 0 893.47 955.96Z" fill="#7f63a4"/><path d="M915.4 858.3L924.8 884.2" stroke="#ffffff" stroke-width="2.2"/><path d="M913.2 860.8L918.0 859.0" stroke="#7f63a4" stroke-width="1.6" stroke-linecap="round"/><path d="M922.3 883.2L925.6 882.0" stroke="#7f63a4" stroke-width="1.6" stroke-linecap="round"/><circle cx="1134.8" cy="936.7" r="71.4" fill="none" stroke="#eff0f0" stroke-width="17.799999999999997"/><path d="M1061.72 966.54A80 80 0 0 1 1108.75 858.36L1117.12 882.66A54.3 54.3 0 0 0 1085.19 956.09Z" fill="#5f4a7f"/><path d="M1110.6 856.7L1118.9 883.1" stroke="#ffffff" stroke-width="2.2"/><path d="M1108.3 859.1L1113.2 857.5" stroke="#5f4a7f" stroke-width="1.6" stroke-linecap="round"/><path d="M1116.4 882.1L1119.8 881.0" stroke="#5f4a7f" stroke-width="1.6" stroke-linecap="round"/></svg><div style="position:absolute;left:535.5px;top:825.3px;width:72px;height:18px;font-size:12px;line-height:18px;color:#595959;text-align:center;white-space:nowrap;letter-spacing:1px;text-indent:1px">第一季度</div><div style="position:absolute;left:718.7px;top:823.7px;width:72px;height:18px;font-size:12px;line-height:18px;color:#595959;text-align:center;white-space:nowrap;letter-spacing:1px;text-indent:1px">第二季度</div><div style="position:absolute;left:902px;top:822.8px;width:72px;height:18px;font-size:12px;line-height:18px;color:#595959;text-align:center;white-space:nowrap;letter-spacing:1px;text-indent:1px">第三季度</div><div style="position:absolute;left:1098.7px;top:823.7px;width:72px;height:18px;font-size:12px;line-height:18px;color:#595959;text-align:center;white-space:nowrap;letter-spacing:1px;text-indent:1px">第四季度</div><div style="position:absolute;left:0px;top:955px;width:1286px;height:22px;background:#f3f4f6;border-top:1px solid #dfe0e3;box-sizing:border-box"></div><svg style="position:absolute;left:0px;top:959px;width:90px;height:14px;" width="90" height="14" viewBox="0 0 90 14"><path d="M9 1L3 7L9 13" fill="none" stroke="#a5a9b1" stroke-width="1.1"/><path d="M32 1L26 7L32 13" fill="none" stroke="#a5a9b1" stroke-width="1.1"/><path d="M52 1L58 7L52 13" fill="none" stroke="#a5a9b1" stroke-width="1.1"/><path d="M77 1L83 7L77 13M87 1V13" fill="none" stroke="#a5a9b1" stroke-width="1.1"/></svg><div style="position:absolute;left:103px;top:956px;width:72px;height:21px;background:#ffffff"></div><div style="position:absolute;left:175px;top:956px;width:146px;height:21px;background:#e5e6eb"></div><div style="position:absolute;left:103px;top:956px;width:72px;height:21px;font-size:12px;line-height:21px;text-align:center;color:#21a366;font-weight:bold">Sheet1</div><div style="position:absolute;left:175px;top:956px;width:73px;height:21px;font-size:12px;line-height:21px;text-align:center;color:#545a66">Sheet2</div><div style="position:absolute;left:248px;top:956px;width:73px;height:21px;font-size:12px;line-height:21px;text-align:center;color:#545a66">Sheet3</div><svg style="position:absolute;left:326px;top:959px;width:14px;height:14px;" width="14" height="14" viewBox="0 0 14 14"><path d="M7 1V13M1 7H13" stroke="#3f4552" stroke-width="1.2"/></svg><svg style="position:absolute;left:788px;top:959px;width:6px;height:14px;" width="6" height="14" viewBox="0 0 6 14"><path d="M1.5 1V13M4.5 1V13" stroke="#b0b3ba" stroke-width="0.9"/></svg><div style="position:absolute;left:801px;top:958px;width:485px;height:17px;background:#e6e7eb"></div><svg style="position:absolute;left:806px;top:962px;width:6px;height:8px;" width="6" height="8" viewBox="0 0 6 8"><path d="M5 0V8L0 4Z" fill="#555"/></svg><div style="position:absolute;left:820px;top:960px;width:450px;height:13px;background:#d5d6dc;border-radius:6px"></div><div style="position:absolute;left:0px;top:977px;width:1286px;height:10px;background:#f3f4f6;border-top:1px solid #e3e4e7;box-sizing:border-box"></div><div style="position:absolute;left:-2px;top:979px;width:20px;height:14px;font-size:11px;line-height:14px;color:#444">@7</div><div style="position:absolute;left:1037px;top:979px;width:22px;height:8px;background:#dcdde2;border-radius:2px"></div><svg style="position:absolute;left:960px;top:978px;width:150px;height:9px;" width="150" height="9" viewBox="0 0 150 9"><path d="M12 2V6M5 3L7.5 5.5M19 3L16.5 5.5" fill="none" stroke="#454b57" stroke-width="1.1"/><path d="M31 1V9M36 3V9" fill="none" stroke="#454b57" stroke-width="1.1"/><path d="M66 1V9M82 3H98V9M82 3V9M88 3V9M93 3V9" stroke="#c8cad0" stroke-width="1"/></svg><svg style="position:absolute;left:1026px;top:979px;width:90px;height:8px;" width="90" height="8" viewBox="0 0 90 8"><path d="M0.5 0V8" stroke="#d5d7dc"/><path d="M15.5 3V8M15.5 3H31.5V8M20.5 3V8M26.5 3V8" fill="none" stroke="#454b57" stroke-width="1.1"/><path d="M40.5 1.5H55.5V8M40.5 1.5V8M43.5 4.5H52.5V8M43.5 4.5V8" fill="none" stroke="#454b57" stroke-width="1.1"/><path d="M66.5 2.5H83.5V8M66.5 2.5V8M72.5 2.5V8M77.5 2.5V8" fill="none" stroke="#454b57" stroke-width="1.1"/></svg><div style="position:absolute;left:1123px;top:978px;width:1px;height:9px;background:#d5d7dc"></div><div style="position:absolute;left:1134px;top:979px;width:40px;height:14px;font-size:12px;line-height:14px;color:#454b57">100%</div><svg style="position:absolute;left:1266px;top:979px;width:16px;height:8px;" width="16" height="8" viewBox="0 0 16 8"><circle cx="8" cy="8" r="6" fill="none" stroke="#454b57" stroke-width="1.1"/></svg>
</body></html>
